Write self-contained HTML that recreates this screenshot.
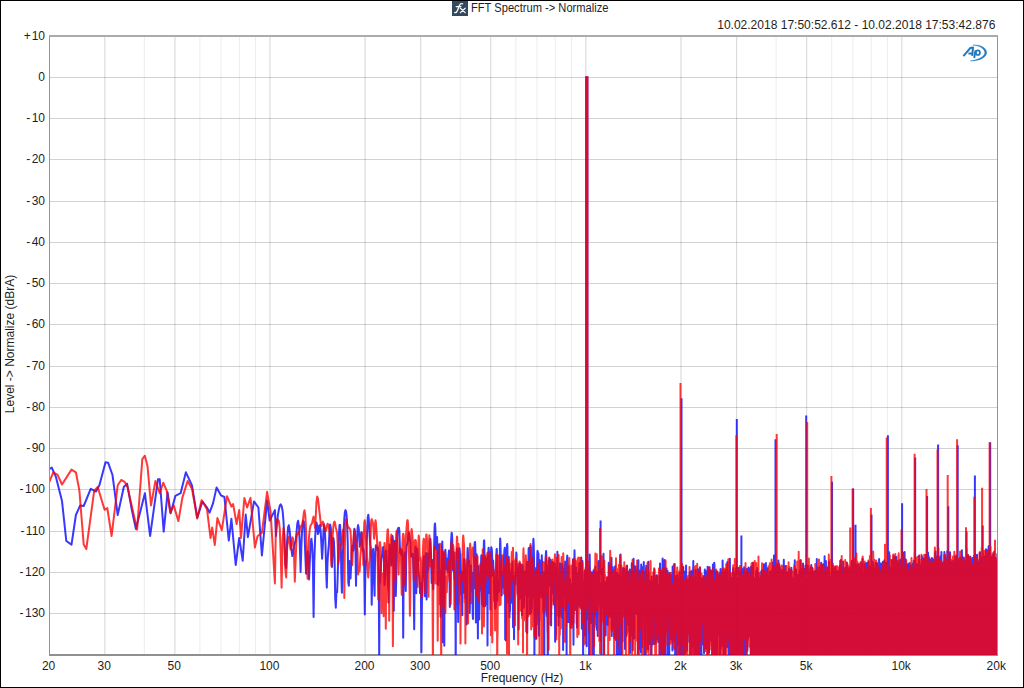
<!DOCTYPE html><html><head><meta charset="utf-8"><style>html,body{margin:0;padding:0;background:#fff;overflow:hidden}svg{display:block}text{font-family:"Liberation Sans", sans-serif;fill:#1e1e1e}</style></head><body>
<svg width="1024" height="688" viewBox="0 0 1024 688">
<rect x="0" y="0" width="1024" height="688" fill="#fff"/>
<path d="M50 77.5H997 M50 118.5H997 M50 159.5H997 M50 201.5H997 M50 242.5H997 M50 283.5H997 M50 324.5H997 M50 366.5H997 M50 407.5H997 M50 448.5H997 M50 489.5H997 M50 531.5H997 M50 572.5H997 M50 613.5H997" stroke="#000" stroke-opacity="0.176" stroke-width="1" fill="none"/>
<path d="M144.30 37V654 M199.92 37V654 M221.07 37V654 M239.39 37V654 M255.55 37V654 M460.20 37V654 M515.82 37V654 M536.97 37V654 M555.29 37V654 M571.45 37V654 M776.10 37V654 M831.72 37V654 M852.87 37V654 M871.19 37V654 M887.35 37V654" stroke="#000" stroke-opacity="0.075" stroke-width="1" fill="none"/>
<path d="M104.83 37V654 M174.91 37V654 M270.00 37V654 M365.10 37V654 M420.73 37V654 M490.81 37V654 M585.90 37V654 M681.00 37V654 M736.63 37V654 M806.71 37V654 M901.80 37V654" stroke="#000" stroke-opacity="0.17" stroke-width="1" fill="none"/>
<path d="M49.5 36V655" stroke="#959595" stroke-width="1"/>
<path d="M997.5 36V655" stroke="#959595" stroke-width="1"/>
<rect x="49" y="35" width="949" height="2" fill="#ababab"/>
<rect x="49" y="654" width="949" height="2" fill="#909090"/>
<defs><clipPath id="pc"><rect x="50" y="36" width="947" height="619"/></clipPath></defs>
<g clip-path="url(#pc)" fill="none" stroke-width="2" stroke-linejoin="round">
<path d="M49.7 468.8L51.8 467.6L55.8 476.6L62.0 501.0L66.3 541.0L71.5 544.6L75.9 515.0L80.2 505.4L83.7 506.0L90.7 488.8L96.0 491.5L99.4 485.3L105.5 462.3L108.1 462.7L112.5 475.0L117.7 515.0L123.8 487.0L127.1 483.6L131.8 509.8L135.9 529.0L144.9 493.2L150.1 536.0L158.0 479.2L159.7 479.2L163.7 531.6L167.6 492.3L170.7 513.3L175.4 495.8L180.6 493.2L185.9 472.3L192.0 485.3L197.2 517.6L202.5 501.5L207.0 507.5L209.6 512.7L213.1 503.1L216.6 487.4L220.9 495.3L224.4 497.0L228.8 540.6L231.4 518.8L235.7 565.0L239.2 538.0L242.7 560.7L245.7 514.5L247.9 537.2L254.0 501.4L258.4 507.5L261.9 555.5L267.1 500.5L269.7 520.6L274.9 510.1L276.0 535.9L277.0 523.4L277.9 515.1L278.9 509.3L279.8 505.6L280.7 504.3L281.6 505.9L282.6 510.9L283.5 521.0L284.4 539.0L285.3 564.9L286.2 568.0L287.1 541.8L288.0 527.6L288.8 525.2L289.7 530.9L290.6 540.5L291.4 549.1L292.3 556.0L293.1 552.8L294.0 547.1L294.8 543.4L295.7 540.3L296.5 532.5L297.3 523.6L298.1 520.8L299.0 526.7L299.8 545.2L300.6 571.9L301.4 545.4L302.2 527.8L303.0 520.9L303.8 521.6L304.5 532.0L305.3 555.4L306.1 573.8L306.9 555.6L307.6 551.3L308.4 560.1L309.1 579.4L309.9 559.6L310.6 542.7L311.4 538.7L312.1 544.9L312.9 563.8L313.6 616.9L314.3 562.4L315.1 538.5L315.8 526.7L316.5 522.5L317.2 526.0L317.9 534.1L318.6 532.4L319.3 525.6L320.0 525.0L320.7 531.6L321.4 544.6L322.1 558.7L322.8 547.3L323.5 530.7L324.1 524.5L324.8 528.6L325.5 544.5L326.2 572.7L326.8 587.6L327.5 562.6L328.2 551.3L328.8 545.3L329.5 532.6L330.1 524.4L330.8 527.6L331.4 542.9L332.0 566.9L332.7 550.8L333.3 538.0L333.9 541.0L334.6 558.6L335.2 598.3L335.8 607.8L336.4 592.7L337.1 592.4L337.7 576.8L338.3 552.6L338.9 534.9L339.5 525.1L340.1 525.0L340.7 537.6L341.3 574.5L341.9 592.7L342.5 563.0L343.1 548.5L343.7 530.4L344.3 518.7L344.8 512.7L345.4 510.1L346.0 511.0L346.6 515.4L347.1 523.8L347.7 541.4L348.3 582.8L348.9 585.7L349.4 561.1L350.0 563.4L350.5 578.4L351.1 566.7L351.7 550.3L352.2 545.8L352.8 550.8L353.3 550.4L353.9 536.5L354.4 528.7L354.9 532.5L355.5 550.5L356.0 585.7L356.5 557.6L357.1 537.5L357.6 527.9L358.1 525.1L358.7 528.3L359.2 536.8L359.7 546.7L360.2 543.3L360.8 534.7L361.3 532.3L361.8 537.3L362.3 546.4L362.8 550.9L363.3 548.5L363.8 551.2L364.3 571.7L364.8 614.4L365.3 573.9L365.8 565.2L366.3 557.6L366.8 542.3L367.3 526.9L367.8 517.1L368.3 514.7L368.8 519.2L369.3 529.0L369.8 539.1L370.3 544.6L370.8 547.8L371.2 559.1L371.7 604.8L372.2 578.8L372.7 552.8L373.1 549.1L373.6 558.0L374.1 582.5L374.6 595.8L375.0 563.1L375.5 549.2L376.0 545.2L376.4 546.6L376.9 549.4L377.3 549.2L377.8 547.4L378.3 551.7L378.7 572.8L379.2 657.2L379.6 584.7L380.1 581.3L380.5 573.8L381.0 563.2L381.4 557.8L381.9 556.7L382.3 553.3L382.7 547.7L383.2 547.1L383.6 554.5L384.1 569.0L384.5 585.0L384.9 579.6L385.4 561.2L385.8 551.7L386.2 550.6L386.7 555.7L387.1 565.0L387.5 574.2L387.9 579.6L388.4 602.4L388.8 584.7L389.2 551.1L389.6 544.6L390.0 549.6L390.5 552.6L390.9 560.1L391.3 565.6L391.7 551.2L392.1 540.0L392.5 535.9L392.9 539.2L393.4 554.4L393.8 610.7L394.2 561.1L394.6 541.4L395.0 540.7L395.4 554.9L395.8 596.0L396.2 582.6L396.6 553.8L397.0 540.5L397.4 532.9L397.8 529.1L398.2 528.0L398.6 527.9L399.0 527.8L399.4 531.0L399.7 541.8L400.1 552.9L400.5 549.4L400.9 549.3L401.3 555.1L401.7 553.5L402.1 550.7L402.4 557.7L402.8 578.3L403.2 637.8L403.6 585.5L404.0 563.8L404.3 554.4L404.7 552.6L405.1 559.3L405.5 583.0L405.8 591.0L406.2 557.9L406.6 546.9L407.0 544.4L407.3 543.6L407.7 541.0L408.1 536.6L408.4 533.0L408.8 532.2L409.2 534.3L409.5 538.1L409.9 540.5L410.3 541.7L410.6 547.4L411.0 555.1L411.3 556.7L411.7 555.7L412.0 554.9L412.4 553.7L412.8 553.7L413.1 559.9L413.5 574.7L413.8 598.0L414.2 629.3L414.5 592.3L414.9 564.2L415.2 550.1L415.6 546.6L415.9 556.7L416.3 593.3L416.6 570.1L417.0 551.2L417.3 548.7L417.6 552.3L418.0 557.0L418.3 562.6L418.7 570.6L419.0 575.3L419.3 576.8L419.7 583.0L420.0 593.1L420.4 586.4L420.7 582.9L421.0 597.2L421.4 652.3L421.7 624.8L422.0 597.4L422.4 584.0L422.7 577.7L423.0 572.3L423.3 563.8L423.7 557.5L424.0 556.0L424.3 558.9L424.6 568.3L425.0 596.3L425.3 589.1L425.6 559.4L425.9 552.9L426.3 564.4L426.6 599.4L426.9 578.1L427.2 558.1L427.5 553.5L427.9 560.1L428.2 570.4L428.5 566.2L428.8 560.1L429.1 557.8L429.4 555.0L429.8 548.2L430.1 541.3L430.4 539.0L430.7 542.9L431.0 552.8L431.3 567.8L431.6 582.9L431.9 573.5L432.2 560.2L432.5 560.0L432.9 584.1L433.2 589.3L433.5 570.5L433.8 567.9L434.1 549.0L434.4 533.0L434.7 525.0L435.0 523.4L435.3 527.5L435.6 536.6L435.9 546.8L436.2 549.1L436.5 543.2L436.8 537.0L437.1 537.0L437.4 547.9L437.7 584.4L438.0 585.0L438.3 553.4L438.6 544.6L438.9 544.8L439.1 553.4L439.4 573.9L439.7 581.5L440.0 570.5L440.3 575.5L440.6 616.8L440.9 589.7L441.2 574.9L441.5 601.9L441.8 568.6L442.0 544.6L442.3 541.5L442.6 557.8L442.9 642.3L443.2 565.9L443.5 552.6L443.7 553.3L444.0 568.4L444.3 645.7L444.6 575.9L444.9 556.9L445.2 550.4L445.4 549.7L445.7 555.2L446.0 564.9L446.3 569.2L446.6 564.0L446.8 558.8L447.1 560.7L447.4 567.8L447.7 571.7L447.9 567.7L448.2 560.7L448.5 555.7L448.8 552.5L449.0 550.6L449.3 557.1L449.6 584.4L449.8 607.0L450.1 603.5L450.4 596.0L450.6 561.9L450.9 546.9L451.2 538.9L451.5 534.2L451.7 532.7L452.0 534.7L452.3 540.4L452.5 550.6L452.8 565.0L453.0 570.5L453.3 558.8L453.6 552.0L453.8 553.8L454.1 563.5L454.4 575.5L454.6 579.3L454.9 577.7L455.1 581.2L455.4 598.9L455.7 670.1L455.9 609.8L456.2 588.9L456.4 568.4L456.7 554.0L457.0 548.2L457.2 550.7L457.5 562.0L457.7 582.0L458.0 606.8L458.2 622.1L458.5 604.1L458.7 576.8L459.0 558.2L459.3 549.3L459.5 548.2L459.8 551.3L460.0 552.7L460.3 553.8L460.5 559.8L460.8 572.4L461.0 594.2L461.3 585.7L461.5 571.2L461.8 573.2L462.0 591.3L462.3 615.2L462.5 587.9L462.7 578.8L463.0 583.8L463.2 593.1L463.5 591.9L463.7 576.5L464.0 563.2L464.2 558.9L464.5 559.8L464.7 560.8L464.9 564.0L465.2 578.2L465.4 598.6L465.7 580.0L465.9 579.3L466.2 597.9L466.4 610.9L466.6 624.4L466.9 615.6L467.1 571.1L467.4 553.7L467.6 547.9L467.8 550.1L468.1 557.3L468.3 562.7L468.5 562.8L468.8 564.6L469.0 563.8L469.2 561.0L469.5 570.1L469.7 612.9L469.9 604.3L470.2 587.6L470.4 586.4L470.6 575.0L470.9 566.9L471.1 565.6L471.3 573.4L471.6 590.5L471.8 580.8L472.0 572.6L472.3 576.4L472.5 587.7L472.7 615.1L473.0 618.9L473.2 585.3L473.4 575.3L473.6 580.6L473.9 588.4L474.1 566.7L474.3 551.5L474.5 544.8L474.8 542.4L475.0 542.0L475.2 543.8L475.4 550.8L475.7 571.3L475.9 622.6L476.1 570.4L476.3 556.9L476.6 554.3L476.8 558.1L477.0 568.2L477.2 589.0L477.5 611.7L477.7 612.1L477.9 638.5L478.1 589.1L478.3 569.6L478.6 566.0L478.8 574.1L479.0 593.0L479.2 619.5L479.4 608.1L479.7 587.2L479.9 576.2L480.1 574.4L480.3 580.7L480.5 590.6L480.7 583.8L481.0 567.5L481.2 557.1L481.4 555.2L481.6 562.0L481.8 578.1L482.0 604.0L482.2 584.6L482.5 563.9L482.7 556.7L482.9 558.7L483.1 571.3L483.3 606.4L483.5 571.1L483.7 549.8L483.9 541.0L484.2 540.4L484.4 547.7L484.6 565.3L484.8 605.9L485.0 606.2L485.2 579.8L485.4 575.4L485.6 579.2L485.8 569.6L486.0 558.1L486.2 560.0L486.5 583.4L486.7 604.3L486.9 573.9L487.1 569.5L487.3 580.5L487.5 645.6L487.7 583.0L487.9 562.3L488.1 556.1L488.3 552.3L488.5 548.2L488.7 547.7L488.9 553.1L489.1 566.6L489.3 593.0L489.5 586.0L489.7 569.4L489.9 565.7L490.1 570.9L490.3 590.4L490.5 609.5L490.7 573.5L490.9 557.2L491.1 549.7L491.3 547.2L491.5 547.9L491.7 549.3L491.9 550.8L492.1 555.2L492.3 564.7L492.5 575.4L492.7 570.5L492.9 561.8L493.1 560.4L493.3 564.8L493.5 568.9L493.7 569.2L493.9 574.3L494.1 588.2L494.3 601.2L494.5 596.6L494.7 594.3L494.9 599.4L495.1 607.1L495.3 608.7L495.5 603.4L495.7 608.0L495.9 602.9L496.1 580.0L496.3 564.0L496.4 554.4L496.6 549.1L496.8 548.9L497.0 558.8L497.2 590.5L497.4 600.7L497.6 581.3L497.8 580.4L498.0 582.8L498.2 585.6L498.4 585.2L498.6 582.3L498.7 581.1L498.9 583.4L499.1 591.7L499.3 589.3L499.5 570.9L499.7 558.7L499.9 549.4L500.1 541.5L500.2 538.4L500.4 541.5L500.6 549.0L500.8 555.8L501.0 556.9L501.2 557.0L501.4 565.4L501.6 593.7L501.7 595.4L501.9 579.1L502.1 581.9L502.3 584.1L502.5 576.9L502.7 571.9L502.8 572.3L503.0 577.6L503.2 584.6L503.4 587.6L503.6 580.8L503.8 569.5L503.9 560.8L504.1 555.2L504.3 552.1L504.5 549.6L504.7 547.8L504.9 551.0L505.0 567.4L505.2 639.4L505.4 594.7L505.6 596.6L505.8 640.4L505.9 629.9L506.1 598.3L506.3 574.6L506.5 561.6L506.7 553.6L506.8 547.9L507.0 544.8L507.2 543.9L507.4 547.5L507.6 562.3L507.7 596.1L507.9 576.0L508.1 571.8L508.3 602.4L508.4 582.2L508.6 558.5L508.8 556.9L509.0 568.4L509.1 586.7L509.3 606.4L509.5 617.4L509.7 588.3L509.8 585.0L510.0 611.3L510.2 581.9L510.4 572.8L510.5 592.8L510.7 597.9L510.9 582.0L511.1 602.8L511.2 601.1L511.4 570.5L511.6 569.4L511.8 574.9L511.9 569.5L512.1 567.5L512.3 565.0L512.4 561.6L512.6 566.3L512.8 588.9L513.0 627.2L513.1 598.3L513.3 594.1L513.5 582.0L513.6 579.9L513.8 600.6L514.0 639.2L514.1 591.8L514.3 583.8L514.5 581.0L514.7 575.5L514.8 575.6L515.0 583.2L515.2 584.6L515.3 577.0L515.5 572.2L515.7 571.5L515.8 571.9L516.0 566.3L516.2 557.2L516.3 552.6L516.5 554.2L516.7 561.6L516.8 571.4L517.0 572.4L517.2 568.4L517.3 571.8L517.5 582.6L517.7 593.4L517.8 593.8L518.0 583.5L518.2 575.8L518.3 579.6L518.5 600.0L518.6 629.4L518.8 599.0L519.0 578.4L519.1 567.0L519.3 563.5L519.5 569.3L519.6 582.9L519.8 595.0L520.0 598.4L520.1 584.0L520.3 572.0L520.4 566.2L520.6 564.0L520.8 564.3L520.9 566.8L521.1 570.3L521.2 571.3L521.4 569.8L521.6 570.4L521.7 577.8L521.9 604.2L522.0 615.2L522.2 579.2L522.4 567.7L522.5 565.1L522.7 567.3L522.8 573.1L523.0 580.7L523.2 581.4L523.3 575.5L523.5 573.0L523.6 579.7L523.8 607.8L524.0 600.4L524.1 574.5L524.3 571.3L524.4 581.3L524.6 593.4L524.7 595.0L524.9 592.4L525.1 585.1L525.2 578.8L525.4 578.0L525.5 579.9L525.7 577.4L525.8 571.3L526.0 571.7L526.1 586.2L526.3 631.8L526.5 586.3L526.6 566.7L526.8 562.1L526.9 568.0L527.1 586.0L527.2 633.0L527.4 614.2L527.5 594.6L527.7 591.9L527.8 595.7L528.0 596.2L528.1 586.5L528.3 568.8L528.5 555.6L528.6 549.2L528.8 547.9L528.9 550.3L529.1 555.8L529.2 564.6L529.4 575.6L529.5 586.6L529.7 591.0L529.8 614.3L530.0 605.1L530.1 568.9L530.3 556.7L530.4 550.3L530.6 546.1L530.7 546.9L530.9 555.5L531.0 575.6L531.2 605.7L531.3 612.3L531.5 592.7L531.6 585.9L531.8 608.9L531.9 605.2L532.1 568.6L532.2 559.9L532.4 565.8L532.5 584.2L532.7 597.5L532.8 579.2L533.0 561.6L533.1 548.4L533.3 540.8L533.4 538.7L533.5 540.4L533.7 544.0L533.8 549.5L534.0 557.2L534.1 567.0L534.3 584.5L534.4 668.7L534.6 586.8L534.7 567.4L534.9 568.2L535.0 590.3L535.2 600.4L535.3 578.1L535.4 570.3L535.6 569.4L535.7 577.6L535.9 600.8L536.0 638.8L536.2 622.7L536.3 606.6L536.5 597.4L536.6 602.3L536.7 624.7L536.9 590.5L537.0 569.7L537.2 559.5L537.3 553.9L537.5 551.0L537.6 550.9L537.7 552.9L537.9 556.7L538.0 560.6L538.2 558.4L538.3 553.1L538.5 554.5L538.6 566.5L538.7 590.6L538.9 635.7L539.0 630.9L539.2 600.9L539.3 582.2L539.4 568.8L539.6 561.5L539.7 560.3L539.9 565.1L540.0 575.6L540.2 588.5L540.3 593.8L540.4 588.3L540.6 580.5L540.7 573.4L540.9 569.4L541.0 570.7L541.1 578.6L541.3 590.3L541.4 597.6L541.5 583.3L541.7 562.8L541.8 555.3L542.0 561.7L542.1 581.4L542.2 589.8L542.4 585.0L542.5 588.4L542.7 592.6L542.8 590.7L542.9 586.6L543.1 587.0L543.2 594.4L543.3 612.0L543.5 604.7L543.6 584.8L543.7 575.8L543.9 572.2L544.0 574.6L544.2 592.4L544.3 661.3L544.4 591.4L544.6 579.7L544.7 587.8L544.8 607.6L545.0 583.6L545.1 577.9L545.2 588.1L545.4 580.7L545.5 564.3L545.6 557.7L545.8 555.5L545.9 552.8L546.1 551.1L546.2 551.9L546.3 555.0L546.5 562.3L546.6 578.6L546.7 614.4L546.9 616.1L547.0 600.5L547.1 596.7L547.3 596.3L547.4 601.2L547.5 614.3L547.7 638.7L547.8 700.0L547.9 645.0L548.1 604.5L548.2 580.0L548.3 569.1L548.4 568.6L548.6 570.4L548.7 565.1L548.8 560.4L549.0 561.8L549.1 566.5L549.2 568.0L549.4 562.9L549.5 558.2L549.6 559.6L549.8 566.9L549.9 577.9L550.0 586.1L550.2 580.7L550.3 573.6L550.4 569.2L550.5 563.7L550.7 560.3L550.8 564.8L550.9 580.9L551.1 625.5L551.2 613.1L551.3 585.0L551.4 571.5L551.6 564.2L551.7 562.3L551.8 565.6L552.0 571.9L552.1 574.5L552.2 574.3L552.3 578.1L552.5 588.8L552.6 593.3L552.7 577.2L552.9 565.4L553.0 562.1L553.1 565.7L553.2 573.0L553.4 576.8L553.5 573.0L553.6 567.7L553.8 566.2L553.9 573.3L554.0 591.5L554.1 603.9L554.3 595.1L554.4 583.3L554.5 571.6L554.6 564.7L554.8 563.4L554.9 569.9L555.0 592.8L555.1 641.7L555.3 591.8L555.4 583.0L555.5 588.3L555.6 611.4L555.8 634.7L555.9 598.1L556.0 587.3L556.1 585.6L556.3 588.9L556.4 583.6L556.5 570.9L556.6 567.8L556.8 577.5L556.9 597.3L557.0 599.1L557.1 575.2L557.3 557.7L557.4 551.8L557.5 556.0L557.6 568.0L557.8 584.1L557.9 592.9L558.0 588.3L558.1 584.8L558.5 625.6L558.6 592.6L558.7 586.6L558.9 593.6L559.0 589.6L559.1 580.8L559.2 586.5L559.3 616.0L559.5 616.3L559.6 593.9L559.7 582.7L559.8 569.9L560.0 563.3L560.1 568.9L560.2 587.4L560.3 613.1L560.4 607.6L560.6 579.1L560.7 567.9L560.8 564.4L560.9 565.9L561.0 575.8L561.2 596.5L561.3 596.6L561.4 584.0L561.5 579.2L561.6 584.9L561.8 614.7L561.9 617.4L562.0 578.4L562.2 563.9L562.5 585.9L562.6 590.4L562.7 578.4L562.8 572.3L563.0 583.4L563.1 650.1L563.2 598.9L563.3 584.2L563.4 576.3L563.6 568.4L563.7 569.1L563.8 579.5L563.9 594.1L564.0 596.3L564.4 571.7L564.5 578.4L564.6 587.8L564.7 589.1L564.8 578.2L565.0 566.5L565.1 561.4L565.2 565.5L565.3 581.1L565.4 605.8L565.5 610.6L565.7 603.8L565.8 601.5L565.9 602.9L566.0 604.7L566.2 595.5L566.5 610.6L566.6 658.3L566.7 602.3L566.8 574.3L566.9 562.3L567.1 557.7L567.2 555.9L567.3 555.6L567.4 558.2L567.5 564.2L568.0 614.5L568.1 621.9L568.2 612.7L568.3 616.2L568.4 587.0L568.5 570.6L568.7 566.2L569.0 622.0L569.1 612.1L569.2 598.9L569.3 593.7L569.4 591.1L569.6 590.7L569.7 591.9L569.8 588.9L569.9 580.6L570.0 579.3L570.5 605.5L570.6 619.2L570.7 627.8L570.8 594.2L570.9 583.9L571.0 589.9L571.1 599.4L571.4 589.4L571.5 590.2L571.6 592.0L571.7 599.2L571.8 618.8L571.9 619.4L572.0 609.8L572.3 623.9L572.5 623.0L572.6 619.7L572.7 594.3L572.8 576.1L572.9 564.5L573.0 559.2L573.5 644.8L573.6 605.5L573.7 579.0L573.8 569.1L573.9 571.4L574.0 577.3L574.5 550.2L574.6 556.2L575.0 579.7L575.1 579.9L575.2 579.8L575.3 581.6L575.4 589.3L575.5 603.2L575.6 610.0L576.0 571.3L576.1 567.5L576.2 567.7L576.3 573.8L576.4 583.8L576.5 591.3L576.7 624.0L576.9 598.9L577.0 627.4L577.4 587.9L577.5 588.8L577.6 593.9L577.7 602.3L577.8 607.8L577.9 597.1L578.0 582.4L578.2 573.3L578.4 605.1L578.5 602.7L579.0 571.9L579.1 569.7L579.4 562.9L579.5 565.8L579.6 579.6L579.7 596.6L579.8 576.2L579.9 570.2L580.0 581.4L580.3 607.3L580.4 605.9L580.5 594.8L581.0 573.0L581.1 568.3L581.3 557.5L581.5 565.1L581.6 575.2L581.8 628.7L582.0 598.8L582.1 586.6L582.2 571.1L582.3 562.3L582.4 560.9L582.5 565.9L582.9 592.8L583.0 613.9L583.1 664.9L583.4 594.1L583.5 590.6L583.7 626.5L583.9 597.4L584.0 589.7L584.3 580.4L584.5 585.4L584.6 592.9L584.8 635.4L585.0 574.7L585.1 570.3L585.3 581.7L585.5 580.8L585.6 583.8L585.9 596.8L586.0 595.5L586.1 588.2L586.4 559.6L586.5 565.3L586.6 586.6L586.7 646.3L587.0 573.8L587.1 569.6L587.3 572.4L587.5 568.0L587.6 571.9L587.9 619.3L588.0 611.7L588.1 596.1L588.4 570.7L588.5 572.5L588.5 577.6L588.9 595.0L589.0 612.7L589.1 671.5L589.4 578.4L589.5 574.7L589.7 554.4L589.9 568.0L590.0 597.5L590.3 621.0L590.4 611.7L590.5 598.6L590.8 571.9L591.0 603.9L591.1 622.9L591.5 572.5L591.6 580.7L592.0 618.4L592.1 608.4L592.4 594.6L592.5 594.0L592.6 597.3L592.8 586.7L592.9 597.2L593.0 654.0L593.4 570.6L593.5 574.5L593.6 588.7L593.8 670.9L594.0 600.1L594.1 592.1L594.1 590.2L594.4 616.3L594.5 586.1L594.7 575.3L595.0 582.2L595.1 584.0L595.3 566.8L595.5 597.4L595.6 591.0L595.8 600.2L595.9 578.4L596.0 571.7L596.4 627.2L596.5 592.6L596.6 582.3L596.9 629.7L597.0 602.4L597.0 589.3L597.2 576.8L597.4 600.9L597.5 597.7L597.7 636.0L598.0 574.5L598.1 572.0L598.2 579.0L598.4 572.7L598.5 568.8L598.7 560.9L599.0 600.3L599.1 586.7L599.4 564.7L599.5 564.9L600.0 606.2L600.1 599.4L600.3 583.7L600.4 640.5L600.5 620.8L601.0 595.8L601.1 601.9L601.2 633.6L601.4 627.5L601.5 659.6L601.8 586.9L602.0 604.6L602.0 598.7L602.2 568.6L602.5 585.2L602.6 577.5L602.7 574.2L602.9 598.7L603.0 606.6L603.5 553.7L603.6 560.6L604.0 617.7L604.1 668.7L604.3 611.9L604.4 634.4L604.5 606.6L604.8 623.9L605.0 583.2L605.1 588.7L605.1 598.8L605.4 582.8L605.5 589.2L605.6 608.4L605.7 635.6L605.9 604.4L606.0 587.0L606.1 581.6L606.3 595.2L606.4 583.1L606.5 585.7L606.9 617.1L607.0 615.2L607.0 584.4L607.1 578.0L607.5 594.9L607.6 610.7L607.6 597.3L607.8 625.0L608.0 604.0L608.1 593.6L608.2 579.5L608.4 617.2L608.5 595.1L608.7 562.8L608.9 599.6L609.0 583.6L609.2 570.5L609.4 595.5L609.5 589.8L609.8 571.2L609.9 581.4L610.0 584.3L610.3 616.7L610.4 568.1L610.5 564.6L610.9 610.5L610.9 594.6L611.0 590.0L611.2 597.8L611.5 562.7L611.5 557.7L611.8 635.9L611.9 598.7L612.0 592.2L612.4 600.6L612.4 583.1L612.5 573.6L612.8 567.3L612.9 574.5L613.0 584.0L613.4 604.9L613.5 627.8L613.7 588.9L613.9 597.8L614.0 595.8L614.3 638.2L614.4 609.7L614.5 603.6L614.8 617.4L615.0 571.2L615.1 566.3L615.5 638.6L615.6 622.4L615.8 639.9L616.0 589.7L616.0 591.1L616.1 627.8L616.4 573.1L616.5 579.6L616.8 655.9L616.9 584.9L617.0 589.7L617.2 614.7L617.4 572.7L617.5 582.3L617.6 621.5L617.9 653.9L618.0 629.9L618.0 608.6L618.2 651.0L618.4 611.2L618.5 590.4L618.8 575.1L619.0 576.8L619.1 584.2L619.5 601.4L619.5 619.5L619.6 700.0L619.9 575.1L619.9 592.8L620.0 625.6L620.5 555.6L620.6 554.4L621.0 604.5L621.0 611.8L621.3 665.8L621.5 594.0L621.6 612.8L621.6 616.8L622.0 578.3L622.0 585.5L622.3 641.7L622.5 641.4L622.6 607.5L622.8 615.2L623.0 579.8L623.0 570.7L623.1 568.1L623.3 597.1L623.5 577.4L623.6 581.2L623.8 572.9L624.0 606.4L624.0 597.4L624.3 597.5L624.5 590.0L624.6 582.1L624.7 569.1L624.9 616.6L625.0 648.9L625.2 601.2L625.5 622.4L625.5 637.0L626.0 576.0L626.1 572.4L626.4 636.1L626.4 604.6L626.5 590.4L626.8 616.2L627.0 565.4L627.0 568.7L627.4 592.7L627.5 592.6L627.6 595.5L627.7 606.6L627.9 571.6L628.0 572.9L628.4 595.6L628.5 624.9L628.7 595.5L629.0 601.2L629.0 587.0L629.1 583.7L629.3 631.0L629.5 591.1L629.5 603.7L629.8 569.4L630.0 611.8L630.1 652.9L630.4 581.8L630.5 584.4L630.6 589.6L630.9 620.1L631.0 590.6L631.1 597.5L631.2 635.6L631.4 627.9L631.5 585.4L631.8 563.2L631.9 564.4L632.0 565.1L632.2 604.8L632.4 571.3L632.5 573.5L632.8 650.2L632.9 591.4L633.0 583.7L633.1 616.6L633.4 599.1L633.5 572.8L633.6 558.7L633.9 607.9L634.0 619.8L634.2 587.5L634.5 638.4L634.6 592.8L635.0 568.1L635.1 566.2L635.4 597.2L635.5 594.8L635.5 589.2L635.6 589.9L635.8 569.9L636.0 576.7L636.0 588.6L636.4 604.1L636.5 591.9L636.5 597.5L636.6 614.1L636.9 580.3L637.0 589.8L637.1 605.1L637.5 568.6L637.6 566.3L637.8 584.1L638.0 584.0L638.0 595.2L638.2 700.0L638.4 560.3L638.5 568.9L638.5 583.6L638.7 569.2L638.9 594.1L639.0 612.8L639.1 625.3L639.4 596.5L639.5 599.3L639.5 607.9L639.6 613.6L639.8 595.1L640.0 612.5L640.0 587.9L640.1 579.6L640.3 649.6L640.5 613.8L640.6 582.2L640.6 570.7L640.8 652.6L641.0 572.0L641.0 574.9L641.2 564.4L641.4 629.4L641.4 575.6L641.5 567.2L641.8 614.5L642.0 595.2L642.0 605.4L642.1 647.0L642.4 567.3L642.5 573.3L642.6 607.3L643.0 598.3L643.0 604.4L643.4 573.0L643.5 606.7L643.6 612.2L643.8 562.1L644.0 589.2L644.0 585.5L644.4 640.1L644.5 593.7L644.5 582.2L644.7 673.5L644.9 626.3L645.0 578.3L645.1 572.4L645.5 641.4L645.5 667.2L645.7 599.0L646.0 611.8L646.0 586.8L646.2 565.7L646.5 606.0L646.6 614.6L646.6 615.4L646.8 590.2L646.9 610.6L647.0 589.5L647.1 620.0L647.3 575.2L647.5 587.1L647.5 595.6L647.8 649.2L648.0 602.8L648.0 595.9L648.2 649.7L648.5 574.0L648.5 561.7L648.9 608.5L649.0 589.9L649.1 600.3L649.4 643.9L649.5 617.9L649.6 596.2L649.7 616.9L649.9 592.1L650.0 580.9L650.4 625.8L650.4 603.8L650.5 588.6L650.6 608.5L650.9 580.8L651.0 588.0L651.2 700.0L651.4 641.2L651.5 594.6L651.6 576.5L651.8 608.1L651.9 596.4L652.0 607.1L652.2 600.8L652.5 622.2L652.6 599.6L652.7 644.4L653.0 608.2L653.1 600.2L653.2 581.7L653.4 621.4L653.5 592.9L653.5 590.1L653.7 618.9L653.9 573.3L654.0 579.7L654.0 594.4L654.2 643.8L654.4 569.2L654.5 570.4L654.5 585.1L654.8 636.7L654.9 594.4L655.0 590.9L655.1 585.8L655.4 620.1L655.5 602.0L655.6 604.4L655.6 643.4L655.8 589.1L656.0 601.2L656.0 606.3L656.1 609.4L656.3 578.1L656.5 595.1L656.5 602.2L656.6 639.4L656.8 575.3L657.0 589.4L657.1 589.7L657.4 617.1L657.5 589.5L657.5 576.0L657.7 624.3L658.0 613.9L658.0 587.2L658.2 641.9L658.5 602.0L658.5 597.0L658.8 634.1L659.0 587.9L659.0 586.8L659.3 625.3L659.4 585.6L659.5 587.5L659.5 603.2L659.6 654.7L660.0 571.9L660.0 563.6L660.4 649.3L660.5 605.7L660.5 613.5L660.7 604.8L660.9 664.0L661.0 629.8L661.1 655.8L661.5 571.9L661.5 578.7L661.7 624.7L661.9 570.4L662.0 573.1L662.0 574.3L662.4 654.8L662.5 587.4L662.5 564.5L662.6 558.5L663.0 598.4L663.0 602.4L663.3 663.6L663.5 580.0L663.5 577.5L664.0 671.3L664.1 601.1L664.3 584.2L664.4 614.0L664.5 583.2L664.6 559.9L664.8 620.5L665.0 573.1L665.0 600.5L665.1 589.5L665.4 646.7L665.5 614.3L665.5 608.6L665.7 679.7L665.8 590.0L666.0 592.5L666.0 584.3L666.1 617.6L666.5 576.7L666.5 568.6L666.9 629.9L667.0 612.4L667.0 584.3L667.1 572.5L667.3 611.8L667.5 589.3L667.5 576.4L667.6 571.1L668.0 607.5L668.0 654.5L668.1 578.7L668.5 606.8L668.5 653.1L668.7 596.8L669.0 602.6L669.0 623.6L669.2 676.2L669.4 579.0L669.5 584.6L669.5 600.6L669.7 573.0L670.0 622.8L670.1 619.5L670.2 636.8L670.4 575.9L670.5 586.7L670.5 589.6L670.7 575.3L670.8 617.0L671.0 592.6L671.0 590.8L671.1 639.0L671.4 590.2L671.5 592.6L671.5 591.7L671.6 619.4L672.0 607.1L672.1 585.7L672.4 650.6L672.5 608.8L672.5 587.5L672.6 566.5L672.8 615.2L673.0 598.0L673.0 614.9L673.1 627.5L673.5 591.0L673.5 589.8L673.6 634.7L673.9 572.5L674.0 581.8L674.0 609.1L674.2 641.5L674.4 594.7L674.5 599.1L674.5 606.6L674.7 564.0L674.9 611.4L675.0 609.4L675.0 589.7L675.1 582.9L675.2 682.2L675.5 607.1L675.5 603.0L675.6 588.3L675.9 641.7L676.0 622.0L676.0 616.6L676.3 628.2L676.4 589.0L676.5 622.5L676.5 593.6L676.6 575.9L676.7 666.7L677.0 605.9L677.1 640.2L677.3 574.9L677.5 644.9L677.5 600.3L677.7 612.2L678.0 578.8L678.0 586.9L678.2 634.1L678.4 584.4L678.5 586.3L678.5 601.4L678.6 616.8L678.9 579.7L678.9 585.4L679.0 614.3L679.3 669.9L679.5 592.2L679.5 588.5L679.6 603.2L679.8 572.5L680.0 584.0L680.0 603.6L680.2 676.7L680.4 575.9L680.5 584.0L680.5 589.1L680.6 645.8L681.0 623.7L681.0 615.5L681.2 586.4L681.4 666.5L681.5 652.2L681.5 634.5L681.6 577.1L681.7 645.1L682.0 598.7L682.0 628.9L682.3 585.2L682.4 700.0L682.5 617.8L682.5 587.1L682.6 568.0L682.9 642.5L683.0 587.6L683.0 570.4L683.2 616.3L683.3 567.0L683.5 613.2L683.5 590.0L684.0 634.7L684.0 620.9L684.2 654.1L684.5 582.4L684.5 581.5L684.8 578.1L685.0 616.9L685.0 600.6L685.2 571.6L685.5 597.1L685.5 624.0L685.6 653.0L685.7 577.2L686.0 596.8L686.0 576.0L686.1 565.5L686.2 629.8L686.5 608.9L686.5 647.7L686.7 581.4L687.0 650.6L687.0 623.0L687.2 598.1L687.5 601.0L687.5 603.4L687.8 585.3L687.9 627.7L688.0 600.3L688.0 591.6L688.1 579.6L688.5 628.4L688.5 613.0L688.5 603.1L688.6 589.3L689.0 601.3L689.0 635.0L689.1 584.5L689.3 641.9L689.5 630.5L689.5 614.4L689.6 618.3L689.7 573.2L690.0 592.4L690.0 584.8L690.2 571.8L690.3 664.0L690.5 589.0L690.5 591.8L690.6 607.8L690.9 571.4L691.0 571.7L691.0 585.3L691.4 584.9L691.5 689.4L691.5 621.9L691.6 700.0L691.8 573.4L692.0 589.3L692.0 586.5L692.2 570.5L692.4 646.7L692.5 623.0L692.5 633.2L692.9 584.1L693.0 592.7L693.0 587.7L693.3 560.9L693.4 627.3L693.5 599.2L693.5 581.4L694.0 632.7L694.0 632.5L694.0 640.8L694.4 668.6L694.5 588.4L694.5 584.2L694.8 577.7L695.0 657.9L695.0 611.7L695.1 592.0L695.3 630.6L695.5 602.5L695.5 590.1L695.7 569.8L696.0 618.3L696.0 577.6L696.1 577.2L696.5 618.5L696.5 634.7L696.7 602.9L696.9 700.0L697.0 635.5L697.0 644.7L697.4 583.1L697.5 632.7L697.5 608.7L697.7 613.7L697.9 569.2L698.0 574.3L698.0 598.5L698.2 598.0L698.3 688.3L698.5 599.3L698.5 608.2L698.7 636.9L698.9 586.3L699.0 596.8L699.0 602.3L699.2 569.2L699.4 631.3L699.5 619.8L699.5 616.0L699.8 621.3L699.9 567.5L700.0 571.0L700.0 592.9L700.2 668.7L700.4 587.9L700.5 623.1L700.5 601.1L700.6 610.0L700.8 578.1L701.0 587.8L701.0 589.5L701.2 588.1L701.4 671.3L701.5 620.7L701.5 608.8L701.6 635.8L701.8 588.8L702.0 608.7L702.0 578.4L702.4 634.0L702.5 579.5L702.5 586.3L702.9 640.7L703.0 603.3L703.0 612.4L703.3 588.4L703.4 644.7L703.5 624.5L703.5 584.3L703.7 641.3L703.8 576.6L704.0 618.0L704.0 653.2L704.3 578.8L704.5 598.9L704.5 597.4L704.6 620.0L704.8 569.6L705.0 582.6L705.0 599.4L705.2 575.2L705.5 617.6L705.5 596.7L705.7 571.6L705.9 648.4L706.0 593.6L706.0 626.3L706.3 630.4L706.4 579.6L706.5 584.4L706.5 584.9L706.6 571.1L706.7 611.1L707.0 607.8L707.0 632.2L707.2 634.7L707.3 586.7L707.5 597.4L707.5 576.9L707.6 566.7L707.7 654.2L708.0 602.1L708.0 624.3L708.1 581.7L708.3 648.5L708.5 582.5L708.5 607.9L708.6 583.0L709.0 647.1L709.0 602.0L709.0 614.0L709.1 652.5L709.2 582.0L709.5 590.1L709.5 599.7L709.6 567.3L709.9 636.4L710.0 622.7L710.0 622.3L710.1 628.1L710.2 576.5L710.5 586.4L710.5 596.9L710.7 640.5L711.0 572.7L711.0 572.0L711.3 570.9L711.3 598.8L711.5 592.7L711.5 610.3L711.6 576.8L711.9 624.0L712.0 581.1L712.0 592.6L712.2 678.1L712.4 587.2L712.5 596.6L712.5 578.0L712.6 625.3L712.9 564.5L713.0 570.6L713.0 611.3L713.3 635.8L713.5 581.3L713.5 586.2L713.9 639.9L713.9 583.5L714.0 598.2L714.0 700.0L714.2 562.7L714.5 564.8L714.5 574.7L714.8 670.4L715.0 597.2L715.0 588.4L715.2 620.3L715.4 571.8L715.5 591.7L715.5 625.4L715.6 578.2L715.7 657.3L716.0 593.3L716.0 595.5L716.4 636.0L716.5 571.0L716.5 573.7L716.9 625.5L717.0 571.8L717.0 595.8L717.1 686.6L717.5 583.2L717.5 579.0L718.0 617.5L718.0 602.5L718.2 574.5L718.3 620.7L718.5 588.0L718.5 578.5L718.6 634.9L719.0 627.6L719.0 606.6L719.4 576.4L719.4 633.4L719.5 623.7L719.5 614.5L719.6 573.0L719.8 671.0L720.0 617.4L720.0 656.5L720.5 569.1L720.5 581.4L720.5 604.4L720.6 649.5L720.7 579.3L721.0 589.9L721.0 639.8L721.4 581.0L721.5 589.2L721.5 617.7L721.8 646.2L722.0 588.7L722.0 585.6L722.4 613.7L722.5 571.8L722.5 596.7L722.6 638.3L722.6 560.4L723.0 591.1L723.0 583.8L723.1 628.8L723.3 576.9L723.5 601.6L723.5 591.9L723.6 577.3L723.8 684.3L724.0 608.0L724.0 611.9L724.2 592.5L724.5 670.4L724.5 607.8L724.7 650.3L724.8 572.0L725.0 648.5L725.0 662.0L725.4 570.1L725.5 600.9L725.5 586.9L725.6 570.9L725.9 617.3L726.0 605.5L726.0 602.6L726.2 583.8L726.4 641.5L726.5 587.7L726.5 581.3L726.7 614.0L727.0 571.5L727.0 587.9L727.1 647.0L727.4 561.9L727.5 573.5L727.5 608.7L727.7 570.5L727.8 638.3L728.0 609.2L728.0 589.9L728.2 581.0L728.4 652.6L728.5 634.9L728.5 597.1L728.6 680.1L728.8 588.4L729.0 621.4L729.0 661.8L729.2 585.4L729.4 683.2L729.5 593.6L729.5 641.5L729.8 667.1L729.9 558.7L730.0 597.3L730.0 625.7L730.1 629.0L730.3 583.1L730.5 594.1L730.5 601.4L730.7 578.0L730.7 608.9L731.0 589.4L731.0 588.3L731.2 677.2L731.2 587.1L731.5 608.3L731.5 584.2L731.6 578.7L731.9 656.3L732.0 582.1L732.0 577.8L732.5 629.9L732.5 600.1L732.5 604.5L732.8 573.2L733.0 635.9L733.0 604.6L733.1 568.3L733.4 658.6L733.5 605.3L733.5 621.4L733.7 633.1L733.9 572.5L734.0 610.8L734.0 613.9L734.1 576.1L734.2 633.5L734.5 596.6L734.5 587.4L734.9 675.7L735.0 605.3L735.0 603.2L735.1 677.5L735.3 581.7L735.5 597.2L735.5 612.6L735.6 571.9L735.7 683.7L736.0 575.2L736.0 568.2L736.4 658.4L736.5 603.6L736.5 612.1L736.7 669.2L736.8 589.6L737.0 622.6L737.0 655.0L737.4 578.0L737.5 638.9L737.5 602.2L737.8 643.0L737.9 580.0L738.0 590.1L738.0 598.8L738.0 648.8L738.3 589.3L738.5 612.2L738.5 632.9L738.6 568.0L738.9 656.2L739.0 582.5L739.0 592.9L739.2 573.6L739.4 700.0L739.5 600.4L739.5 622.4L739.6 574.7L739.9 663.5L740.0 600.5L740.0 619.6L740.1 630.9L740.5 571.0L740.5 586.2L740.8 680.0L740.9 582.0L741.0 587.6L741.0 586.9L741.1 573.8L741.3 680.9L741.5 673.6L741.5 628.9L741.7 568.8L742.0 599.4L742.0 591.8L742.1 581.0L742.2 670.8L742.5 592.1L742.5 612.1L742.6 569.3L743.0 700.0L743.0 650.7L743.5 579.5L743.5 579.4L743.9 639.5L744.0 627.1L744.0 628.1L744.1 567.3L744.3 644.7L744.5 597.7L744.5 604.8L744.9 573.6L745.0 673.4L745.0 608.6L745.0 600.3L745.4 626.4L745.5 573.1L745.5 586.9L745.5 575.9L745.7 572.1L745.8 695.7L746.0 608.7L746.0 603.0L746.4 584.1L746.5 700.0L746.5 675.8L746.5 612.9L746.6 569.0L746.6 685.2L747.0 593.5L747.0 602.0L747.4 651.0L747.5 579.3L747.5 591.1L747.7 588.6L747.8 639.7L748.0 614.7L748.0 598.6L748.2 568.5L748.3 634.5L748.5 571.9L748.5 567.4L749.0 636.8L749.0 595.9L749.0 573.5L749.1 618.1L749.5 586.0L749.5 600.7L749.6 569.3L749.8 624.8L750.0 586.1L750.0 586.6L750.1 616.2L750.2 581.0L750.5 592.0L750.5 629.1L750.7 567.1L751.0 601.6L751.0 660.0L751.5 571.3L751.5 566.4L751.9 650.8L752.0 605.8L752.0 681.2L752.4 696.7L752.5 581.2L752.5 572.0L752.6 653.1L752.9 567.0L753.0 588.5L753.0 590.1L753.1 562.8L753.4 660.4L753.5 621.4L753.5 582.9L753.6 581.9L753.7 659.1L754.0 632.4L754.0 656.5L754.0 693.7L754.2 578.6L754.5 611.1L754.5 623.4L754.6 660.2L754.6 586.2L755.0 624.3L755.0 581.6L755.1 667.6L755.5 578.1L755.5 586.2L755.5 654.0L755.9 588.4L756.0 596.3L756.0 575.6L756.2 571.0L756.4 668.1L756.5 622.5L756.5 596.8L756.6 676.4L756.6 586.5L757.0 627.0L757.0 632.1L757.2 568.0L757.3 692.5L757.5 628.5L757.5 594.4L757.6 579.8L757.6 630.4L758.0 597.2L758.0 666.8L758.5 573.3L758.5 587.4L758.5 642.1L758.6 578.1L759.0 671.8L759.0 649.8L759.0 665.8L759.4 579.1L759.5 591.6L759.5 579.2L759.8 665.3L759.9 578.4L760.0 591.0L760.0 591.2L760.4 582.8L760.5 674.5L760.5 608.1L760.8 578.7L760.8 670.8L761.0 583.2L761.0 597.7L761.2 571.2L761.3 672.9L761.5 589.3L761.5 640.8L761.8 582.4L762.0 664.4L762.0 620.6L762.0 606.5L762.1 640.1L762.5 570.1L762.5 586.0L762.5 609.3L762.7 576.6L763.0 700.0L763.0 627.5L763.0 611.4L763.3 671.8L763.4 575.5L763.5 628.8L763.5 617.4L763.7 640.0L763.8 574.3L764.0 585.7L764.0 564.3L764.4 700.0L764.5 608.3L764.5 606.3L764.5 631.9L764.8 566.6L765.0 614.4L765.0 598.8L765.3 572.6L765.4 639.5L765.5 573.5L765.5 605.6L765.8 654.5L765.9 563.0L766.0 582.9L766.0 582.2L766.3 569.0L766.3 642.9L766.5 608.5L766.5 598.4L766.6 665.7L766.7 576.4L767.0 586.9L767.0 581.2L767.1 571.3L767.2 629.0L767.5 605.6L767.5 605.8L767.6 659.6L767.7 568.3L768.0 618.0L768.0 599.6L768.2 576.3L768.5 639.3L768.5 622.3L768.5 645.0L768.6 577.5L768.7 663.2L769.0 608.1L769.0 585.2L769.2 685.4L769.5 593.5L769.5 605.8L769.5 653.7L769.9 572.1L770.0 616.1L770.0 629.6L770.4 576.7L770.5 660.7L770.5 607.4L770.5 593.1L770.6 638.9L770.7 571.2L771.0 591.8L771.0 599.3L771.5 588.2L771.5 666.5L771.5 602.2L771.6 573.7L771.9 646.4L772.0 584.0L772.0 575.5L772.3 635.9L772.5 591.1L772.5 569.1L772.6 662.5L772.8 562.6L773.0 592.5L773.0 611.8L773.1 575.2L773.1 650.4L773.5 605.8L773.5 640.7L773.7 641.4L774.0 555.6L774.0 571.5L774.1 656.7L774.4 566.5L774.5 591.8L774.5 612.8L774.8 575.6L774.9 656.5L775.0 616.0L775.0 609.5L775.3 565.4L775.4 700.0L775.5 587.8L775.5 581.9L775.6 576.0L775.8 645.2L776.0 609.9L776.0 587.9L776.2 564.5L776.4 699.2L776.5 603.2L776.5 579.8L776.7 577.4L776.7 642.7L777.0 594.0L777.0 592.1L777.3 679.4L777.3 571.8L777.5 618.7L777.5 606.3L777.6 644.6L777.7 564.1L778.0 586.6L778.0 611.3L778.3 651.1L778.4 560.5L778.5 608.4L778.5 618.9L778.7 573.1L778.8 663.1L779.0 588.6L779.0 604.6L779.1 565.0L779.3 688.6L779.5 607.3L779.5 607.4L779.6 676.6L779.9 567.3L780.0 654.9L780.0 596.1L780.4 650.7L780.4 569.5L780.5 579.3L780.5 571.1L780.8 659.5L781.0 584.5L781.0 589.1L781.2 667.6L781.4 580.1L781.5 627.1L781.5 614.5L781.8 570.4L781.9 656.1L782.0 597.3L782.0 638.0L782.1 667.4L782.5 570.2L782.5 570.6L782.5 592.9L782.7 574.5L782.9 665.8L783.0 596.8L783.0 596.3L783.1 572.2L783.1 679.4L783.5 588.9L783.5 593.4L783.8 559.7L783.9 677.4L784.0 578.6L784.0 687.9L784.1 580.4L784.5 628.4L784.5 595.7L784.9 578.4L785.0 636.3L785.0 598.0L785.0 576.2L785.3 655.8L785.4 565.9L785.5 635.6L785.5 614.2L785.6 576.5L785.8 651.1L786.0 580.9L786.0 590.8L786.2 643.9L786.5 572.5L786.5 594.6L786.6 573.1L786.8 700.0L787.0 598.0L787.0 629.7L787.2 648.2L787.5 572.2L787.5 583.5L787.6 674.6L787.7 572.9L788.0 634.6L788.0 615.0L788.1 657.8L788.4 576.3L788.5 602.4L788.5 700.0L788.6 580.0L789.0 615.6L789.0 653.5L789.1 568.4L789.5 594.4L789.5 625.8L789.6 574.4L789.8 690.6L790.0 607.9L790.0 610.1L790.0 590.5L790.3 655.1L790.5 606.3L790.5 591.5L790.8 655.6L790.8 569.8L791.0 598.2L791.0 578.3L791.0 637.4L791.4 567.8L791.5 613.0L791.5 612.1L791.7 700.0L791.7 577.9L792.0 586.8L792.0 597.1L792.2 700.0L792.3 577.5L792.5 589.2L792.5 612.7L792.7 675.5L792.9 584.1L793.0 594.1L793.0 582.7L793.2 580.6L793.4 677.6L793.5 597.5L793.5 638.8L793.7 666.3L793.9 583.6L794.0 613.0L794.0 596.6L794.3 660.6L794.5 573.6L794.5 564.4L794.6 700.0L794.8 560.2L795.0 626.5L795.0 625.6L795.1 572.3L795.3 637.1L795.5 599.9L795.5 609.1L795.7 579.7L795.8 657.4L796.0 611.4L796.0 622.6L796.0 569.4L796.1 639.7L796.5 596.0L796.5 609.6L796.6 575.5L796.9 656.1L797.0 582.5L797.0 624.0L797.1 657.3L797.2 577.0L797.5 610.3L797.5 582.9L797.7 574.8L797.8 692.8L798.0 589.9L798.0 597.7L798.0 679.3L798.1 578.4L798.5 619.9L798.5 649.4L798.8 673.1L799.0 576.7L799.0 624.2L799.1 593.4L799.2 654.8L799.5 608.6L799.5 600.2L799.6 570.4L799.7 662.1L800.0 622.5L800.0 601.5L800.4 560.5L800.5 670.1L800.5 638.1L800.9 673.4L801.0 572.6L801.0 599.9L801.0 614.5L801.1 568.7L801.4 700.0L801.5 596.3L801.5 643.3L801.7 571.5L801.8 700.0L802.0 656.8L802.0 603.7L802.2 671.7L802.5 578.8L802.5 588.5L802.5 635.4L802.6 576.0L802.8 646.6L803.0 577.2L803.0 563.4L803.1 644.1L803.5 600.0L803.5 568.5L803.6 675.9L804.0 598.8L804.0 580.4L804.0 645.8L804.2 577.5L804.5 622.1L804.5 614.2L804.6 576.5L804.7 664.3L805.0 597.2L805.0 629.6L805.4 648.7L805.4 565.6L805.5 599.3L805.5 595.3L805.7 579.7L805.9 674.7L806.0 613.6L806.0 585.6L806.0 577.8L806.3 655.2L806.5 609.6L806.5 586.9L806.7 673.1L806.7 582.8L807.0 587.0L807.0 591.8L807.0 579.8L807.1 700.0L807.5 588.2L807.5 578.6L807.8 700.0L807.8 565.5L808.0 581.0L808.0 574.7L808.5 670.3L808.5 581.7L808.6 679.3L808.7 571.3L809.0 600.2L809.0 586.5L809.3 658.1L809.4 578.5L809.5 619.9L809.5 595.5L809.7 572.2L809.7 682.4L810.0 650.4L810.0 617.7L810.2 650.7L810.5 567.9L810.5 614.3L810.5 627.5L810.6 579.0L810.9 673.2L811.0 602.1L811.0 599.8L811.1 700.0L811.3 564.9L811.5 610.0L811.5 598.3L811.7 569.6L811.8 669.7L812.0 637.2L812.0 678.1L812.0 700.0L812.3 567.7L812.5 601.8L812.5 653.0L812.6 585.9L812.8 678.5L813.0 591.3L813.0 586.8L813.3 575.2L813.4 698.6L813.5 594.7L813.5 572.3L813.6 690.3L814.0 616.6L814.0 597.8L814.1 696.6L814.4 571.7L814.5 677.6L814.5 632.9L814.9 659.4L815.0 570.9L815.0 649.0L815.0 627.9L815.3 571.0L815.4 658.9L815.5 605.4L815.5 619.4L815.7 663.5L815.9 572.2L816.0 612.6L816.0 643.5L816.0 573.8L816.1 691.3L816.5 584.0L816.5 619.5L816.8 636.2L816.8 558.9L817.0 580.1L817.0 568.0L817.3 659.0L817.5 589.8L817.5 609.2L817.5 700.0L818.0 587.9L818.0 605.1L818.0 612.5L818.2 659.5L818.3 572.2L818.5 611.1L818.5 602.0L818.6 697.9L818.7 581.2L819.0 595.2L819.0 586.8L819.2 567.2L819.2 692.4L819.5 580.5L819.5 639.3L819.6 678.5L819.7 574.7L820.0 622.7L820.0 607.4L820.0 669.6L820.4 584.1L820.5 611.2L820.5 599.6L820.6 573.7L820.9 685.5L821.0 595.3L821.0 594.1L821.1 675.3L821.2 562.8L821.5 607.0L821.5 592.6L821.8 564.9L821.9 663.5L822.0 616.4L822.0 626.8L822.2 680.3L822.4 581.1L822.5 611.3L822.5 695.3L822.9 580.7L823.0 603.7L823.0 624.9L823.0 676.9L823.4 564.3L823.5 584.1L823.5 604.4L823.6 684.8L823.9 576.1L824.0 609.5L824.0 637.5L824.1 684.0L824.4 567.2L824.5 602.8L824.5 580.1L824.6 556.3L825.0 643.2L825.0 582.6L825.0 602.8L825.2 652.5L825.4 577.5L825.5 606.1L825.5 578.1L825.6 700.0L825.9 561.0L826.0 574.3L826.0 606.4L826.1 667.5L826.2 567.9L826.5 638.2L826.5 614.9L826.5 678.1L826.8 580.2L827.0 583.0L827.0 628.1L827.2 572.1L827.4 679.7L827.5 600.1L827.5 612.5L827.6 661.7L827.9 567.7L828.0 626.6L828.0 631.7L828.1 570.0L828.5 646.5L828.5 588.4L828.6 700.0L828.9 561.8L829.0 620.7L829.0 586.3L829.2 678.0L829.3 572.7L829.5 609.5L829.5 594.9L829.7 579.7L829.8 700.0L830.0 600.8L830.0 598.7L830.3 576.9L830.4 700.0L830.5 587.3L830.5 605.2L830.6 579.7L830.8 668.4L831.0 611.8L831.0 620.9L831.2 646.5L831.3 586.8L831.5 618.9L831.5 648.7L831.7 568.6L831.9 664.5L832.0 594.0L832.0 637.8L832.2 565.5L832.4 664.4L832.5 597.7L832.5 599.1L832.6 563.3L832.9 677.0L833.0 638.5L833.0 594.6L833.1 574.9L833.4 658.7L833.5 584.7L833.5 616.6L833.6 569.1L833.6 644.8L834.0 596.1L834.0 632.3L834.0 573.0L834.3 671.0L834.5 604.2L834.5 611.4L834.7 663.3L834.9 576.9L835.0 613.7L835.0 583.1L835.1 662.6L835.4 566.6L835.5 587.2L835.5 669.4L835.5 679.2L835.6 573.5L836.0 585.4L836.0 580.8L836.2 681.5L836.3 578.6L836.5 617.2L836.5 662.4L836.6 575.3L837.0 667.0L837.0 597.2L837.0 603.3L837.0 700.0L837.2 571.0L837.5 588.1L837.5 573.0L837.5 571.8L837.7 684.8L838.0 590.3L838.0 664.3L838.3 581.2L838.5 686.3L838.5 621.3L838.6 700.0L838.8 573.3L839.0 601.2L839.0 641.7L839.2 570.9L839.3 700.0L839.5 598.5L839.5 634.6L839.6 700.0L839.9 565.4L840.0 574.6L840.0 605.4L840.2 571.3L840.3 671.2L840.5 600.8L840.5 572.5L840.9 560.0L840.9 636.9L841.0 598.4L841.0 588.3L841.2 566.9L841.5 645.8L841.5 623.6L841.5 637.7L841.7 694.1L841.9 570.4L842.0 635.5L842.0 635.1L842.3 654.3L842.5 569.3L842.5 574.6L842.6 568.7L842.9 650.8L843.0 627.8L843.0 640.1L843.1 561.6L843.4 650.3L843.5 614.9L843.5 598.5L843.6 695.6L843.8 570.4L844.0 591.6L844.0 628.8L844.3 667.3L844.4 576.0L844.5 595.6L844.5 630.7L844.6 700.0L844.7 580.4L845.0 595.0L845.0 599.1L845.2 676.8L845.2 567.7L845.5 603.8L845.5 621.9L845.5 700.0L845.6 570.4L846.0 626.1L846.0 599.6L846.0 656.1L846.2 575.2L846.5 608.0L846.5 580.5L846.5 626.8L846.9 562.6L847.0 581.0L847.0 587.1L847.3 664.7L847.4 566.5L847.5 658.4L847.5 598.3L847.6 688.6L847.8 571.9L848.0 599.5L848.0 648.3L848.3 569.3L848.5 590.1L848.5 581.2L848.6 673.6L848.9 574.6L849.0 625.3L849.0 628.1L849.0 700.0L849.4 575.0L849.5 588.9L849.5 630.3L849.5 694.9L849.9 567.6L850.0 574.0L850.0 604.0L850.0 678.8L850.4 572.8L850.5 611.8L850.5 607.5L850.8 691.3L850.9 577.7L851.0 579.1L851.0 573.5L851.2 700.0L851.5 563.1L851.5 590.9L851.5 606.2L851.5 700.0L851.8 560.8L852.0 644.9L852.0 602.9L852.2 572.3L852.4 643.1L852.5 619.5L852.5 596.7L852.9 668.6L852.9 574.4L853.0 585.2L853.0 580.5L853.0 573.1L853.2 663.8L853.5 631.8L853.5 597.9L853.7 661.1L853.8 564.9L854.0 588.1L854.0 572.3L854.5 673.7L854.5 638.7L854.5 646.0L854.6 563.2L854.8 655.9L855.0 590.8L855.0 597.0L855.2 563.7L855.3 700.0L855.5 608.4L855.5 589.5L855.6 641.2L855.9 573.4L856.0 614.5L856.0 594.8L856.0 577.8L856.2 649.2L856.5 591.8L856.5 617.0L856.6 573.9L856.9 688.0L857.0 589.4L857.0 609.8L857.3 700.0L857.5 564.4L857.5 571.4L857.7 676.5L858.0 564.7L858.0 564.2L858.4 700.0L858.5 670.3L858.5 604.1L858.6 564.5L858.8 660.8L859.0 607.0L859.0 635.9L859.2 570.8L859.5 644.5L859.5 610.5L859.5 611.8L859.5 567.5L859.6 691.9L860.0 603.8L860.0 621.4L860.2 700.0L860.3 576.6L860.5 613.0L860.5 607.5L860.9 566.6L861.0 660.6L861.0 649.1L861.1 563.3L861.5 599.1L861.5 580.4L861.7 563.7L861.7 667.2L862.0 589.7L862.0 584.0L862.2 649.2L862.2 568.7L862.5 575.8L862.5 592.9L862.7 558.9L862.8 678.3L863.0 581.9L863.0 582.6L863.1 572.8L863.4 652.2L863.5 615.3L863.5 599.4L863.7 700.0L863.9 574.5L864.0 602.1L864.0 664.9L864.4 573.3L864.4 700.0L864.5 634.4L864.5 601.9L864.8 698.4L864.9 563.7L865.0 592.9L865.0 601.8L865.1 700.0L865.2 569.1L865.5 597.5L865.5 600.7L865.7 662.8L865.8 573.1L866.0 645.9L866.0 609.8L866.0 649.2L866.1 571.4L866.5 635.5L866.5 616.8L866.7 563.1L866.8 672.5L867.0 585.4L867.0 565.0L867.2 681.2L867.5 619.5L867.5 660.5L867.7 575.4L868.0 594.8L868.0 605.5L868.3 572.4L868.4 672.8L868.5 606.7L868.5 599.5L868.5 689.9L868.5 561.5L869.0 596.5L869.0 574.1L869.1 570.2L869.3 672.4L869.5 600.3L869.5 655.8L869.7 566.6L869.7 700.0L870.0 594.0L870.0 568.6L870.1 657.4L870.5 567.7L870.5 638.6L870.5 607.5L870.8 670.9L870.9 569.4L871.0 617.8L871.0 665.9L871.2 568.6L871.5 588.5L871.5 639.3L871.5 682.3L871.8 572.8L872.0 599.8L872.0 582.7L872.1 700.0L872.4 561.5L872.5 605.0L872.5 635.5L873.0 700.0L873.0 562.7L873.0 608.1L873.2 575.4L873.2 662.4L873.5 644.2L873.5 593.1L873.6 576.8L874.0 700.0L874.0 620.5L874.2 700.0L874.3 568.7L874.5 606.2L874.5 613.4L874.9 700.0L875.0 571.8L875.0 611.2L875.0 578.8L875.4 700.0L875.5 564.7L875.5 584.6L875.7 647.1L875.7 563.1L876.0 609.0L876.0 610.0L876.1 563.2L876.4 676.0L876.5 638.8L876.5 593.4L876.6 638.0L877.0 563.0L877.0 608.1L877.0 601.8L877.1 667.2L877.4 569.0L877.5 643.9L877.5 674.7L877.6 570.8L877.6 700.0L878.0 596.9L878.0 581.2L878.2 570.6L878.3 697.8L878.5 610.8L878.5 593.4L878.7 642.6L878.9 565.6L879.0 607.5L879.0 600.3L879.1 558.9L879.3 672.5L879.5 608.9L879.5 612.2L879.8 563.2L880.0 677.3L880.0 570.1L880.0 569.2L880.1 681.0L880.5 585.0L880.5 616.6L880.6 572.7L881.0 670.7L881.0 627.6L881.1 660.2L881.2 563.4L881.5 623.9L881.5 613.6L881.6 700.0L882.0 572.1L882.0 581.7L882.2 677.0L882.4 565.3L882.5 652.6L882.5 609.8L882.5 662.1L882.9 561.7L883.0 593.6L883.0 618.1L883.0 700.0L883.1 575.9L883.5 615.2L883.5 612.8L883.6 572.3L883.8 681.8L884.0 592.9L884.0 650.7L884.4 671.3L884.4 560.2L884.5 646.2L884.5 615.1L884.8 572.8L884.9 655.0L885.0 626.7L885.0 645.2L885.1 656.5L885.3 567.5L885.5 600.1L885.5 614.6L885.7 570.2L885.8 700.0L886.0 575.6L886.0 591.4L886.1 693.5L886.2 562.7L886.5 580.6L886.5 601.3L886.8 571.4L886.8 678.0L887.0 602.9L887.0 656.7L887.2 663.0L887.3 567.7L887.5 649.9L887.5 646.0L887.7 563.9L887.8 676.6L888.0 583.8L888.0 594.3L888.2 700.0L888.4 565.7L888.5 577.2L888.5 598.2L888.5 658.4L888.7 562.8L889.0 614.4L889.0 646.4L889.2 552.2L889.3 674.1L889.5 579.5L889.5 647.6L889.7 658.5L889.9 568.3L890.0 617.9L890.0 589.7L890.1 692.4L890.3 578.4L890.5 632.9L890.5 605.4L890.7 567.7L890.8 672.7L891.0 657.7L891.0 614.0L891.0 571.0L891.3 666.3L891.5 608.3L891.5 590.0L891.9 560.1L891.9 671.1L892.0 624.1L892.0 627.4L892.3 660.7L892.5 562.0L892.5 578.1L892.5 597.6L892.8 673.9L892.9 565.1L893.0 621.9L893.0 612.8L893.0 580.9L893.2 698.3L893.5 608.3L893.5 584.9L893.6 556.0L893.6 642.2L894.0 602.2L894.0 596.4L894.4 697.1L894.4 567.9L894.5 586.7L894.5 585.9L894.5 561.9L894.9 700.0L895.0 598.1L895.0 634.2L895.2 556.7L895.3 665.8L895.5 618.4L895.5 620.1L895.5 680.5L895.9 567.0L896.0 609.5L896.0 626.2L896.3 556.9L896.4 687.1L896.5 633.2L896.5 584.3L896.6 692.9L897.0 572.2L897.0 624.1L897.0 609.9L897.1 561.1L897.2 684.6L897.5 598.0L897.5 575.7L897.7 693.9L897.9 566.6L898.0 580.6L898.0 580.2L898.1 672.9L898.4 569.6L898.5 606.2L898.5 600.3L898.7 563.2L898.8 700.0L899.0 626.1L899.0 640.9L899.3 654.3L899.4 561.2L899.5 620.9L899.5 646.6L899.5 560.2L899.6 666.4L900.0 620.1L900.0 582.6L900.3 692.0L900.4 561.6L900.5 603.7L900.5 607.2L900.8 559.4L900.8 700.0L901.0 579.8L901.0 659.5L901.3 569.8L901.5 678.2L901.5 611.3L901.5 591.8L901.7 661.2L901.9 563.8L902.0 611.4L902.0 631.1L902.2 687.8L902.3 559.2L902.5 608.7L902.5 601.9L902.7 558.3L902.7 677.2L903.0 614.4L903.0 644.0L903.0 667.9L903.3 570.8L903.5 606.5L903.5 602.8L903.7 682.1L904.0 552.6L904.0 580.5L904.1 693.8L904.4 564.5L904.5 616.4L904.5 623.9L904.6 551.9L904.7 700.0L905.0 606.8L905.0 608.9L905.0 559.0L905.2 668.6L905.5 585.9L905.5 621.9L905.6 559.2L905.8 700.0L906.0 605.3L906.0 648.8L906.1 673.8L906.3 571.0L906.5 588.5L906.5 600.5L906.5 660.9L906.7 564.1L907.0 646.5L907.0 578.1L907.1 686.4L907.3 566.0L907.5 593.5L907.5 638.6L907.8 700.0L908.0 564.6L908.0 600.1L908.0 608.7L908.2 688.2L908.3 571.0L908.5 602.1L908.5 571.2L908.7 673.6L908.9 563.6L909.0 605.2L909.0 583.8L909.0 563.8L909.4 700.0L909.5 588.4L909.5 633.4L909.7 700.0L909.9 569.5L910.0 585.8L910.0 587.8L910.2 564.7L910.4 651.1L910.5 608.3L910.5 607.7L910.5 700.0L910.9 568.1L911.0 580.3L911.0 649.5L911.0 700.0L911.2 567.2L911.5 604.6L911.5 600.4L911.6 572.0L911.7 680.5L912.0 625.3L912.0 592.0L912.0 565.5L912.1 700.0L912.5 609.3L912.5 619.7L912.7 667.7L912.9 563.5L913.0 570.8L913.0 607.0L913.2 700.0L913.3 565.4L913.5 615.6L913.5 650.6L913.7 560.7L913.9 700.0L914.0 585.4L914.0 608.9L914.5 700.0L914.5 571.0L914.5 573.3L914.5 585.5L914.6 673.9L914.7 563.6L915.0 621.0L915.0 631.4L915.3 671.1L915.3 560.9L915.5 628.7L915.5 627.3L915.7 660.3L915.9 570.8L916.0 651.6L916.0 694.0L916.1 569.1L916.5 591.4L916.5 588.7L916.6 681.1L916.6 565.1L917.0 580.8L917.0 585.5L917.2 697.2L917.4 564.3L917.5 646.0L917.5 614.4L917.5 672.5L917.7 569.4L918.0 642.6L918.0 615.3L918.1 700.0L918.1 570.0L918.5 583.7L918.5 617.9L918.7 570.7L918.7 677.5L919.0 627.5L919.0 579.3L919.1 555.6L919.3 656.8L919.5 604.2L919.5 600.0L919.7 563.7L919.7 700.0L920.0 617.8L920.0 615.4L920.1 565.7L920.3 676.7L920.5 586.6L920.5 624.7L920.8 659.8L921.0 577.7L921.0 572.9L921.4 700.0L921.5 611.0L921.5 588.3L921.6 689.0L921.9 556.3L922.0 583.6L922.0 607.8L922.2 565.9L922.3 700.0L922.5 600.4L922.5 626.1L922.7 560.9L922.9 687.6L923.0 574.8L923.0 573.2L923.1 566.1L923.3 700.0L923.5 630.6L923.5 597.9L923.9 558.5L923.9 676.2L924.0 633.8L924.0 592.8L924.1 563.1L924.2 665.7L924.5 608.7L924.5 638.2L924.7 566.2L924.8 700.0L925.0 574.1L925.0 610.5L925.1 569.5L925.5 680.2L925.5 611.1L925.5 621.7L925.8 555.1L925.8 700.0L926.0 575.9L926.0 572.1L926.2 700.0L926.3 564.3L926.5 617.9L926.5 607.4L926.7 560.4L926.9 695.4L927.0 596.3L927.0 640.5L927.1 557.2L927.5 700.0L927.5 622.5L927.5 638.0L927.5 700.0L927.7 566.0L928.0 631.6L928.0 583.6L928.0 552.4L928.1 666.9L928.5 572.4L928.5 595.4L928.5 556.0L928.9 667.4L929.0 594.6L929.0 608.5L929.1 564.7L929.4 676.9L929.5 653.8L929.5 598.7L929.6 559.6L929.8 690.5L930.0 611.0L930.0 567.7L930.3 700.0L930.4 562.8L930.5 617.9L930.5 608.4L930.6 700.0L930.6 560.1L931.0 572.5L931.0 593.3L931.0 570.9L931.0 700.0L931.5 617.5L931.5 598.0L931.8 558.1L931.9 700.0L932.0 578.8L932.0 578.4L932.1 669.9L932.4 558.4L932.5 639.8L932.5 585.5L933.0 693.4L933.0 559.3L933.0 596.1L933.0 631.2L933.1 562.1L933.2 659.4L933.5 603.7L933.5 640.6L933.5 561.1L933.7 700.0L934.0 607.1L934.0 640.9L934.1 561.7L934.4 700.0L934.5 573.0L934.5 637.3L934.5 700.0L935.0 565.8L935.0 572.5L935.0 594.2L935.0 700.0L935.3 552.3L935.5 622.9L935.5 668.3L935.6 551.5L935.7 700.0L936.0 632.6L936.0 597.3L936.1 569.5L936.2 700.0L936.5 571.8L936.5 588.5L936.8 689.7L936.8 556.8L937.0 667.5L937.0 673.1L937.1 700.0L937.2 565.4L937.5 586.2L937.5 618.6L937.7 564.2L937.8 700.0L938.0 578.0L938.0 594.5L938.3 700.0L938.5 562.7L938.5 591.7L938.5 659.1L938.5 700.0L938.9 557.5L939.0 606.0L939.0 619.5L939.2 563.4L939.2 659.1L939.5 577.1L939.5 632.0L939.7 561.7L940.0 700.0L940.0 642.9L940.0 603.1L940.4 648.0L940.4 564.8L940.5 606.9L940.5 600.3L940.5 556.0L940.9 660.5L941.0 592.4L941.0 678.7L941.3 688.2L941.4 552.1L941.5 576.1L941.5 598.7L941.6 563.5L941.9 646.7L942.0 605.4L942.0 573.2L942.0 562.7L942.4 691.2L942.5 592.3L942.5 628.3L942.8 566.3L942.8 689.1L943.0 611.9L943.0 586.0L943.0 677.6L943.3 563.2L943.5 649.3L943.5 600.6L943.7 697.5L943.8 570.5L944.0 621.3L944.0 626.2L944.2 676.2L944.4 551.9L944.5 580.8L944.5 591.9L944.8 694.5L945.0 555.9L945.0 595.0L945.0 615.5L945.2 673.8L945.4 558.4L945.5 665.3L945.5 602.5L945.6 679.7L945.9 558.3L946.0 594.5L946.0 647.4L946.0 563.6L946.3 686.1L946.5 603.5L946.5 616.9L946.6 558.6L946.9 700.0L947.0 590.8L947.0 605.5L947.2 700.0L947.3 551.3L947.5 614.7L947.5 590.0L947.5 659.2L947.9 562.4L948.0 588.6L948.0 595.3L948.1 655.3L948.1 551.6L948.5 588.6L948.5 601.3L948.5 570.4L948.6 700.0L949.0 598.7L949.0 602.5L949.2 685.1L949.4 567.6L949.5 572.2L949.5 640.2L949.9 686.6L950.0 552.3L950.0 664.0L950.0 592.9L950.2 560.0L950.3 656.3L950.5 578.5L950.5 608.1L950.7 692.5L951.0 568.4L951.0 637.6L951.0 675.6L951.2 561.5L951.3 681.2L951.5 603.3L951.5 580.7L951.7 565.7L951.7 684.3L952.0 617.9L952.0 673.5L952.0 700.0L952.5 565.1L952.5 616.4L952.5 636.3L952.6 681.3L952.8 561.0L953.0 593.1L953.0 610.7L953.2 675.1L953.3 564.7L953.5 620.0L953.5 629.5L953.8 663.5L954.0 564.0L954.0 572.9L954.2 700.0L954.3 563.5L954.5 637.3L954.5 644.7L954.5 666.4L954.8 571.3L955.0 597.4L955.0 608.5L955.1 556.7L955.4 686.8L955.5 575.8L955.5 590.6L955.7 563.1L956.0 666.5L956.0 567.9L956.0 576.8L956.3 561.9L956.5 700.0L956.5 607.8L956.5 571.7L956.6 688.4L957.0 555.5L957.0 572.7L957.1 560.8L957.3 692.3L957.5 638.7L957.5 598.1L957.9 563.3L958.0 700.0L958.0 605.9L958.0 581.7L958.2 560.1L958.4 684.9L958.5 601.8L958.5 608.9L958.5 672.8L958.5 567.6L959.0 628.2L959.0 575.8L959.2 571.2L959.5 700.0L959.5 627.2L959.5 660.3L959.5 565.7L959.7 685.1L960.0 574.4L960.0 561.2L960.2 674.4L960.2 557.4L960.5 612.6L960.5 642.5L960.6 679.3L960.9 558.3L961.0 584.9L961.0 601.7L961.1 688.0L961.4 563.4L961.5 607.4L961.5 593.1L961.6 695.6L961.9 550.2L962.0 610.9L962.0 626.6L962.0 555.1L962.4 699.6L962.5 672.7L962.5 602.3L962.5 655.1L962.9 564.7L963.0 582.9L963.0 573.0L963.0 561.5L963.5 700.0L963.5 575.6L963.5 606.8L963.6 700.0L963.8 557.5L964.0 646.0L964.0 600.5L964.1 666.2L964.4 560.6L964.5 573.8L964.5 578.8L964.8 700.0L964.9 563.6L965.0 618.5L965.0 587.0L965.1 691.3L965.5 568.2L965.5 582.0L965.5 571.0L965.6 561.7L965.7 673.2L966.0 625.1L966.0 645.3L966.1 671.5L966.5 559.2L966.5 619.8L966.5 595.1L967.0 557.4L967.0 686.1L967.0 612.8L967.0 608.0L967.1 700.0L967.2 563.5L967.5 594.1L967.5 570.7L967.7 680.2L967.9 555.0L968.0 613.6L968.0 613.4L968.4 557.5L968.5 682.2L968.5 631.2L968.5 589.4L968.6 700.0L969.0 568.2L969.0 584.0L969.0 581.5L969.3 569.3L969.5 692.0L969.5 590.6L969.5 609.2L969.7 564.7L969.9 654.3L970.0 601.4L970.0 589.5L970.4 700.0L970.4 556.7L970.5 673.8L970.5 616.0L970.6 564.9L970.9 685.3L971.0 585.3L971.0 580.8L971.0 568.2L971.1 700.0L971.5 626.2L971.5 605.5L971.6 568.0L971.7 668.7L972.0 596.8L972.0 640.9L972.1 677.4L972.2 564.8L972.5 587.6L972.5 598.5L972.5 558.0L972.8 687.8L973.0 576.9L973.0 570.0L973.2 567.9L973.3 700.0L973.5 571.0L973.5 563.6L973.6 688.8L974.0 596.0L974.0 590.0L974.1 555.7L974.4 700.0L974.5 613.8L974.5 603.2L974.7 686.4L974.9 560.5L975.0 591.1L975.0 614.9L975.1 686.4L975.4 555.0L975.5 629.3L975.5 682.8L975.9 571.1L976.0 591.6L976.0 622.1L976.0 566.8L976.2 679.4L976.5 589.2L976.5 582.5L976.5 700.0L977.0 562.7L977.0 626.8L977.0 647.1L977.1 554.8L977.1 673.4L977.5 596.9L977.5 595.7L977.7 559.8L977.8 679.6L978.0 594.3L978.0 596.7L978.1 563.6L978.2 700.0L978.5 590.6L978.5 613.3L978.8 700.0L978.9 564.2L979.0 652.2L979.0 595.7L979.0 697.6L979.4 561.6L979.5 584.4L979.5 630.1L979.6 700.0L980.0 552.3L980.0 614.1L980.0 616.5L980.3 564.3L980.3 676.0L980.5 637.1L980.5 586.1L980.8 700.0L980.9 557.4L981.0 596.1L981.0 682.0L981.2 700.0L981.4 561.5L981.5 589.5L981.5 586.4L981.5 663.4L981.9 563.3L982.0 624.8L982.0 612.7L982.2 684.0L982.5 560.2L982.5 619.4L982.5 593.4L982.7 546.1L983.0 696.4L983.0 587.6L983.0 643.7L983.3 565.9L983.4 657.9L983.5 585.4L983.5 596.2L983.7 700.0L983.9 560.1L984.0 603.4L984.0 589.1L984.2 556.6L984.5 681.9L984.5 625.7L984.5 616.9L984.6 688.9L984.7 564.3L985.0 604.5L985.0 614.2L985.4 556.3L985.5 680.1L985.5 584.7L985.5 615.3L985.7 695.9L986.0 549.3L986.0 564.9L986.0 567.7L986.2 554.1L986.3 665.7L986.5 649.0L986.5 596.7L986.8 551.2L987.0 700.0L987.0 582.0L987.0 572.1L987.1 660.0L987.1 568.7L987.5 598.5L987.5 566.4L987.6 550.0L988.0 697.7L988.0 596.3L988.0 593.2L988.2 554.5L988.4 672.9L988.5 587.5L988.5 571.4L988.6 546.3L988.9 688.2L989.0 606.8L989.0 630.0L989.4 690.2L989.5 557.2L989.5 591.0L989.5 692.4L989.7 555.1L990.0 577.0L990.0 602.8L990.4 677.6L990.5 562.6L990.5 595.1L990.5 581.2L990.8 663.0L990.9 559.2L991.0 586.6L991.0 605.2L991.1 556.8L991.5 690.7L991.5 587.1L991.7 558.8L991.7 700.0L992.0 590.2L992.0 579.3L992.4 700.0L992.5 565.9L992.5 605.5L992.5 576.8L992.6 565.3L993.0 700.0L993.0 637.7L993.0 590.9L993.1 554.9L993.3 673.8L993.5 577.0L993.5 564.6L993.6 684.4L994.0 560.1L994.0 607.1L994.0 577.6L994.2 551.5L994.4 700.0L994.5 579.2L994.5 689.3L994.8 563.1L994.9 696.9L995.0 572.5L995.0 609.0L995.3 557.9L995.4 677.4L995.5 600.5L995.5 636.9L995.8 688.0L996.0 561.1L996.0 603.5L996.4 568.6L996.4 700.0L996.5 617.9L996.5 645.1L996.8 560.4L996.8 700.0L997.0 573.8L997.0 607.6L997.2 700.0L997.5 553.9L997.5 574.5L997.5 586.3L997.6 662.4L997.6 559.6L998.0 583.4L998.0 600.6L998.4 676.6L998.4 552.4L998.5 633.5L998.5 598.1L998.9 560.3L998.9 700.0L999.0 575.5L999.0 604.7L999.4 664.9L999.5 563.7L999.5 574.1L999.5 588.6L999.6 700.0L999.8 552.6L1000.0 626.4L1000.0 602.5L1000.1 561.2L1000.3 687.0L1000.3 589.6M586.2 600V76.3M587.4 600V76.3M600.6 575V520.5M681.5 575V398.2M736.8 575V419.0M775.5 575V439.3M806.2 575V415.6M832.0 575V481.8M853.2 575V488.6M871.5 575V514.5M887.9 575V435.3M902.1 575V503.3M915.2 575V457.5M927.1 575V495.9M938.1 575V444.4M948.3 575V506.3M957.7 575V445.3M966.6 575V531.6M974.9 575V475.5M982.7 575V525.5M990.2 575V442.3M741.4 575V535.5M855.5 575V524.7M850.8 575V613.7" stroke="#0000ff" stroke-opacity="0.78"/>
<path d="M49.4 481.9L53.2 472.3L57.6 474.9L62.0 484.5L71.5 469.6L75.9 472.3L79.4 490.6L83.7 544.6L86.3 549.0L94.2 490.6L97.7 487.0L104.6 509.8L107.3 508.0L111.6 536.0L117.7 485.3L121.2 480.0L124.7 481.9L127.5 487.1L131.8 506.3L137.1 529.8L142.3 459.2L144.9 455.7L147.5 466.2L151.0 505.4L155.4 481.0L159.7 493.2L163.2 482.7L166.7 490.6L170.2 512.4L173.7 505.4L178.4 521.1L182.4 497.6L187.6 481.0L192.0 488.8L197.2 518.5L201.6 500.2L207.0 509.2L210.5 538.0L212.2 527.6L214.8 545.0L217.4 518.0L221.8 530.2L227.0 496.2L231.4 506.6L233.1 504.0L236.6 524.0L239.2 510.1L241.0 538.0L244.4 497.9L247.1 507.5L250.5 497.9L254.9 547.6L257.5 536.3L261.9 532.8L267.1 491.8L270.6 511.9L274.9 583.4L276.0 519.5L277.0 519.2L277.9 519.7L278.9 521.1L279.8 529.1L280.7 553.4L281.6 587.8L282.6 539.6L283.5 528.0L284.4 534.7L285.3 569.6L286.2 577.4L287.1 549.2L288.0 538.8L288.8 536.8L289.7 542.9L290.6 549.5L291.4 544.3L292.3 537.3L293.1 538.6L294.0 553.8L294.8 581.7L295.7 558.0L296.5 539.2L297.3 532.8L298.1 533.5L299.0 534.3L299.8 529.6L300.6 526.1L301.4 525.8L302.2 525.6L303.0 520.0L303.8 513.0L304.5 510.2L305.3 515.4L306.1 531.5L306.9 565.4L307.6 578.8L308.4 550.5L309.1 536.1L309.9 528.6L310.6 525.3L311.4 524.3L312.1 523.0L312.9 519.0L313.6 516.6L314.3 521.2L315.1 527.9L315.8 515.7L316.5 501.8L317.2 496.6L317.9 498.1L318.6 503.8L319.3 510.4L320.0 516.7L320.7 523.3L321.4 526.1L322.1 523.8L322.8 521.6L323.5 523.2L324.1 526.1L324.8 528.9L325.5 530.8L326.2 530.5L326.8 526.8L327.5 523.8L328.2 524.3L328.8 527.3L329.5 531.2L330.1 538.4L330.8 554.2L331.4 566.0L332.0 548.9L332.7 535.4L333.3 527.2L333.9 522.7L334.6 521.6L335.2 524.0L335.8 527.5L336.4 529.8L337.1 533.3L337.7 544.7L338.3 564.3L338.9 560.0L339.5 548.1L340.1 544.2L340.7 544.8L341.3 545.4L341.9 540.6L342.5 532.4L343.1 529.6L343.7 540.3L344.3 597.9L344.8 549.9L345.4 525.9L346.0 519.2L346.6 520.1L347.1 523.5L347.7 526.4L348.3 527.5L348.9 527.5L349.4 528.4L350.0 528.9L350.5 531.0L351.1 541.2L351.7 564.0L352.2 565.3L352.8 553.0L353.3 543.1L353.9 533.6L354.4 529.8L354.9 531.6L355.5 537.6L356.0 545.5L356.5 548.8L357.1 545.9L357.6 552.4L358.1 574.5L358.7 570.5L359.2 568.2L359.7 571.2L360.2 559.2L360.8 552.1L361.3 543.3L361.8 534.5L362.3 532.7L362.8 543.4L363.3 565.0L363.8 537.5L364.3 522.4L364.8 520.3L365.3 526.1L365.8 536.3L366.3 546.7L366.8 555.2L367.3 564.6L367.8 574.0L368.3 577.5L368.8 570.3L369.3 562.8L369.8 558.2L370.3 545.2L370.8 529.4L371.2 520.8L371.7 519.1L372.2 520.7L372.7 522.0L373.1 524.4L373.6 530.8L374.1 538.8L374.6 534.8L375.0 524.6L375.5 520.2L376.0 523.0L376.4 529.9L376.9 536.6L377.3 547.9L377.8 569.4L378.3 599.4L378.7 567.8L379.2 548.6L379.6 542.3L380.1 542.2L380.5 547.0L381.0 563.4L381.4 613.3L381.9 581.1L382.3 573.6L382.7 576.2L383.2 581.4L383.6 616.2L384.1 558.3L384.5 542.9L384.9 547.4L385.4 573.1L385.8 628.7L386.2 568.5L386.7 549.3L387.1 537.5L387.5 530.1L387.9 529.4L388.4 537.0L388.8 556.8L389.2 620.7L389.6 578.1L390.0 557.6L390.5 548.9L390.9 539.8L391.3 534.5L391.7 537.9L392.1 550.2L392.5 573.1L392.9 646.2L393.4 565.6L393.8 548.7L394.2 542.3L394.6 542.1L395.0 554.6L395.4 581.6L395.8 548.5L396.2 533.7L396.6 530.8L397.0 533.5L397.4 538.8L397.8 547.0L398.2 561.6L398.6 574.5L399.0 560.6L399.4 552.8L399.7 551.5L400.1 550.3L400.5 548.6L400.9 553.4L401.3 573.4L401.7 594.8L402.1 558.1L402.4 542.8L402.8 536.5L403.2 533.7L403.6 534.3L404.0 540.2L404.3 554.7L404.7 581.0L405.1 584.0L405.5 555.2L405.8 540.3L406.2 533.0L406.6 527.5L407.0 522.9L407.3 520.3L407.7 520.2L408.1 524.0L408.4 533.4L408.8 547.5L409.2 563.6L409.5 582.7L409.9 615.7L410.3 599.4L410.6 560.8L411.0 540.3L411.3 530.8L411.7 529.1L412.0 531.9L412.4 535.6L412.8 541.0L413.1 550.9L413.5 567.5L413.8 580.3L414.2 556.8L414.5 543.2L414.9 540.2L415.2 540.3L415.6 539.9L415.9 541.1L416.3 548.5L416.6 569.1L417.0 574.8L417.3 566.8L417.6 587.0L418.0 572.7L418.3 544.7L418.7 535.6L419.0 537.1L419.3 546.9L419.7 560.2L420.0 560.6L420.4 557.3L420.7 560.6L421.0 577.4L421.4 597.4L421.7 570.7L422.0 573.9L422.4 596.3L422.7 565.1L423.0 549.2L423.3 542.2L423.7 538.8L424.0 539.2L424.3 545.0L424.6 558.8L425.0 586.8L425.3 593.0L425.6 561.5L425.9 542.5L426.3 534.5L426.6 534.6L426.9 539.3L427.2 543.3L427.5 544.0L427.9 548.8L428.2 566.9L428.5 596.7L428.8 556.4L429.1 539.8L429.4 535.3L429.8 539.2L430.1 549.0L430.4 560.0L430.7 566.4L431.0 566.6L431.3 563.4L431.6 560.5L431.9 562.1L432.2 571.0L432.5 593.3L432.9 668.3L433.2 595.7L433.5 581.1L433.8 569.2L434.1 555.2L434.4 546.7L434.7 546.7L435.0 555.1L435.3 568.9L435.6 583.5L435.9 582.6L436.2 561.1L436.5 550.5L436.8 551.2L437.1 562.4L437.4 586.9L437.7 640.8L438.0 591.8L438.3 577.1L438.6 580.2L438.9 604.5L439.1 602.6L439.4 563.2L439.7 547.4L440.0 543.7L440.3 549.5L440.6 564.2L440.9 590.6L441.2 671.7L441.5 590.1L441.8 573.6L442.0 566.2L442.3 557.3L442.6 551.1L442.9 556.0L443.2 581.7L443.5 606.1L443.7 563.5L444.0 552.4L444.3 554.5L444.6 571.0L444.9 603.0L445.2 605.4L445.4 613.1L445.7 589.9L446.0 577.2L446.3 578.3L446.6 587.3L446.8 592.3L447.1 579.3L447.4 569.2L447.7 562.0L447.9 562.0L448.2 574.8L448.5 574.8L448.8 560.4L449.0 562.1L449.3 577.6L449.6 581.6L449.8 576.1L450.1 580.4L450.4 601.4L450.6 604.3L450.9 565.1L451.2 548.4L451.5 541.8L451.7 543.9L452.0 557.0L452.3 568.0L452.5 553.3L452.8 545.8L453.0 545.0L453.3 546.4L453.6 549.5L453.8 558.0L454.1 577.8L454.4 609.4L454.6 580.4L454.9 566.2L455.1 560.4L455.4 555.6L455.7 552.5L455.9 553.7L456.2 557.3L456.4 554.5L456.7 543.8L457.0 536.6L457.2 537.1L457.5 548.4L457.7 585.3L458.0 571.6L458.2 548.0L458.5 543.9L458.7 550.5L459.0 566.9L459.3 591.1L459.5 603.8L459.8 597.5L460.0 591.6L460.3 604.4L460.5 643.4L460.8 586.8L461.0 574.7L461.3 573.9L461.5 575.6L461.8 577.0L462.0 581.3L462.3 578.9L462.5 562.7L462.7 547.5L463.0 537.9L463.2 535.4L463.5 538.1L463.7 541.4L464.0 544.7L464.2 552.4L464.5 573.4L464.7 602.4L464.9 574.6L465.2 579.7L465.4 643.6L465.7 593.3L465.9 578.8L466.2 579.4L466.4 583.7L466.6 583.0L466.9 573.7L467.1 563.4L467.4 558.9L467.6 565.4L467.8 592.2L468.1 623.5L468.3 586.7L468.5 574.7L468.8 567.6L469.0 564.6L469.2 569.4L469.5 577.9L469.7 559.3L469.9 545.5L470.2 543.6L470.4 548.8L470.6 555.0L470.9 561.6L471.1 575.3L471.3 603.3L471.6 573.2L471.8 557.5L472.0 554.4L472.3 553.4L472.5 549.7L472.7 547.4L473.0 549.2L473.2 552.9L473.4 554.8L473.6 555.3L473.9 557.6L474.1 562.2L474.3 565.0L474.5 563.9L474.8 562.3L475.0 561.0L475.2 564.5L475.4 577.8L475.7 588.8L475.9 575.9L476.1 566.6L476.3 565.3L476.6 574.5L476.8 595.8L477.0 572.5L477.2 556.4L477.5 556.1L477.7 569.5L477.9 593.2L478.1 601.4L478.3 586.9L478.6 577.0L478.8 578.0L479.0 589.4L479.2 589.3L479.4 576.8L479.7 574.7L479.9 578.0L480.1 572.6L480.3 564.2L480.5 563.8L480.7 570.8L481.0 579.1L481.2 583.5L481.4 584.4L481.6 585.7L481.8 596.0L482.0 633.4L482.2 579.0L482.5 557.9L482.7 549.6L482.9 549.3L483.1 556.6L483.3 571.8L483.5 593.3L483.7 623.7L483.9 626.4L484.2 591.7L484.4 579.5L484.6 577.7L484.8 566.8L485.0 556.0L485.2 555.6L485.4 565.7L485.6 582.3L485.8 571.0L486.0 562.7L486.2 564.6L486.5 571.8L486.7 575.0L486.9 566.4L487.1 556.6L487.3 553.0L487.5 558.9L487.7 571.0L487.9 567.6L488.1 562.1L488.3 558.2L488.5 555.5L488.7 560.9L488.9 573.4L489.1 577.5L489.3 565.0L489.5 553.9L489.7 551.9L489.9 558.8L490.1 570.7L490.3 579.0L490.5 583.5L490.7 600.4L490.9 635.2L491.1 586.0L491.3 567.4L491.5 562.6L491.7 570.4L491.9 591.8L492.1 617.9L492.3 642.4L492.5 618.9L492.7 584.4L492.9 572.3L493.1 569.6L493.3 569.9L493.5 571.2L493.7 575.2L493.9 583.7L494.1 589.1L494.3 589.1L494.5 593.7L494.7 597.1L494.9 601.0L495.1 630.5L495.3 603.9L495.5 578.8L495.7 571.6L495.9 568.5L496.1 563.8L496.3 558.1L496.4 554.4L496.6 555.8L496.8 567.4L497.0 597.5L497.2 670.8L497.4 638.6L497.6 632.4L497.8 590.8L498.0 581.1L498.2 583.3L498.4 571.8L498.6 559.1L498.7 555.6L498.9 557.1L499.1 557.3L499.3 557.5L499.5 566.7L499.7 605.3L499.9 593.4L500.1 569.1L500.2 570.7L500.4 598.6L500.6 604.5L500.8 573.1L501.0 568.2L501.2 572.8L501.4 574.1L501.6 566.7L501.7 560.3L501.9 560.2L502.1 561.7L502.3 558.6L502.5 555.3L502.7 555.2L502.8 558.8L503.0 563.5L503.2 564.3L503.4 566.1L503.6 575.9L503.8 590.5L503.9 593.6L504.1 580.5L504.3 569.1L504.5 566.9L504.7 571.8L504.9 578.8L505.0 586.9L505.2 593.7L505.4 585.2L505.6 577.4L505.8 579.1L505.9 582.2L506.1 567.7L506.3 556.0L506.5 557.2L506.7 572.0L506.8 605.1L507.0 653.5L507.2 616.3L507.4 594.8L507.6 585.2L507.7 582.1L507.9 575.7L508.1 566.0L508.3 559.6L508.4 562.7L508.6 581.7L508.8 622.0L509.0 655.0L509.1 598.4L509.3 568.5L509.5 563.6L509.7 579.1L509.8 597.9L510.0 577.1L510.2 572.4L510.4 577.0L510.5 584.5L510.7 579.6L510.9 572.8L511.1 577.0L511.2 579.6L511.4 566.6L511.6 556.8L511.8 552.0L511.9 552.8L512.1 562.1L512.3 579.8L512.4 571.0L512.6 557.3L512.8 550.6L513.0 547.8L513.1 551.6L513.3 564.0L513.5 581.6L513.6 582.3L513.8 568.2L514.0 560.5L514.1 561.7L514.3 567.8L514.5 572.7L514.7 579.2L514.8 596.6L515.0 625.4L515.2 588.5L515.3 571.3L515.5 563.5L515.7 559.5L515.8 558.4L516.0 561.4L516.2 568.7L516.3 574.7L516.5 571.0L516.7 565.0L516.8 563.7L517.0 565.0L517.2 565.4L517.3 570.4L517.5 589.3L517.7 596.3L517.8 586.3L518.0 597.5L518.2 644.4L518.3 603.4L518.5 589.4L518.6 586.5L518.8 584.3L519.0 578.3L519.1 569.1L519.3 562.8L519.5 561.4L519.6 562.4L519.8 561.9L520.0 563.0L520.1 569.5L520.3 581.9L520.4 596.2L520.6 610.8L520.8 598.8L520.9 576.7L521.1 569.9L521.2 581.0L521.4 607.4L521.6 584.4L521.7 574.8L521.9 578.1L522.0 591.4L522.2 618.6L522.4 604.1L522.5 578.9L522.7 571.2L522.8 581.5L523.0 652.6L523.2 575.0L523.3 554.5L523.5 548.3L523.6 551.9L523.8 569.7L524.0 620.6L524.1 583.2L524.3 580.5L524.4 592.7L524.6 584.8L524.7 573.7L524.9 568.8L525.1 569.4L525.2 573.6L525.4 584.5L525.5 579.5L525.7 561.1L525.8 555.2L526.0 559.2L526.1 567.0L526.3 566.8L526.5 562.0L526.6 563.3L526.8 574.3L526.9 599.5L527.1 688.6L527.2 597.7L527.4 580.8L527.5 579.4L527.7 577.6L527.8 567.7L528.0 567.9L528.1 589.7L528.3 616.2L528.5 577.0L528.6 568.2L528.8 565.9L528.9 563.3L529.1 561.3L529.2 565.2L529.4 582.7L529.5 598.3L529.7 579.0L529.8 570.0L530.0 563.6L530.1 557.1L530.3 550.6L530.4 545.5L530.6 544.0L530.7 548.7L530.9 563.3L531.0 597.5L531.2 629.4L531.3 593.8L531.5 585.9L531.6 584.4L531.8 584.9L531.9 593.4L532.1 626.4L532.2 616.9L532.4 584.6L532.5 569.5L532.7 562.4L532.8 559.4L533.0 558.1L533.1 560.3L533.3 567.5L533.4 575.7L533.5 579.9L533.7 584.6L533.8 590.5L534.0 583.2L534.1 578.4L534.3 588.7L534.4 636.2L534.6 593.6L534.7 576.3L534.9 578.2L535.0 586.0L535.2 589.7L535.3 585.7L535.4 575.4L535.6 571.6L535.7 573.4L535.9 574.1L536.0 570.2L536.2 570.4L536.3 584.4L536.5 638.6L536.6 608.4L536.7 602.2L536.9 617.2L537.0 596.7L537.2 581.1L537.3 577.2L537.5 579.3L537.6 585.2L537.7 591.6L537.9 588.8L538.0 578.7L538.2 573.5L538.3 579.9L538.5 610.4L538.6 601.8L538.7 573.5L538.9 563.2L539.0 563.4L539.2 573.5L539.3 590.8L539.4 611.9L539.6 687.6L539.7 603.3L539.9 587.0L540.0 588.7L540.2 596.5L540.3 604.6L540.4 619.7L540.6 606.0L540.7 582.7L540.9 575.2L541.0 585.5L541.1 604.4L541.3 583.2L541.4 577.9L541.5 582.3L541.7 586.6L541.8 600.6L542.0 667.3L542.1 602.6L542.2 584.9L542.4 580.0L542.5 580.8L542.7 587.3L542.8 605.4L542.9 656.3L543.1 582.7L543.2 563.6L543.3 561.9L543.5 576.3L543.6 601.7L543.7 575.0L543.9 562.6L544.0 563.5L544.2 576.1L544.3 599.8L544.4 590.0L544.6 572.0L544.7 565.0L544.8 570.6L545.0 601.3L545.1 611.6L545.2 585.9L545.4 590.2L545.5 584.8L545.6 574.9L545.8 567.4L545.9 558.8L546.1 556.0L546.2 561.4L546.3 570.9L546.5 574.5L546.6 578.5L546.7 582.8L546.9 581.1L547.0 583.5L547.1 595.4L547.3 593.6L547.4 582.2L547.5 589.4L547.7 632.0L547.8 614.6L547.9 582.2L548.1 568.6L548.2 565.5L548.3 571.7L548.4 592.0L548.6 649.7L548.7 589.4L548.8 570.5L549.0 561.3L549.1 557.6L549.2 559.2L549.4 566.9L549.5 583.9L549.6 624.2L549.8 607.2L549.9 584.0L550.0 576.1L550.2 581.0L550.3 614.6L550.4 588.7L550.5 568.8L550.7 568.0L550.8 576.1L550.9 584.9L551.1 597.3L551.2 608.8L551.3 576.4L551.4 563.2L551.6 562.4L551.7 565.7L551.8 567.6L552.0 566.7L552.1 563.8L552.2 560.4L552.3 559.4L552.5 564.8L552.6 579.9L552.7 601.3L552.9 587.9L553.0 572.2L553.1 568.8L553.2 577.8L553.4 601.2L553.5 604.8L553.6 581.0L553.8 572.2L553.9 572.2L554.0 576.1L554.1 578.8L554.3 575.6L554.4 569.4L554.5 565.1L554.6 561.6L554.8 556.9L554.9 554.2L555.0 557.5L555.1 565.1L555.3 567.3L555.4 565.5L555.5 566.6L555.6 572.2L555.8 584.4L555.9 607.8L556.0 627.8L556.1 615.6L556.3 613.1L556.4 639.6L556.5 619.4L556.6 581.3L556.8 565.2L556.9 558.6L557.0 557.5L557.1 560.2L557.3 567.5L557.4 580.7L557.5 595.9L557.6 600.5L557.8 603.4L557.9 615.0L558.0 601.4L558.5 558.7L558.6 555.1L558.7 558.6L558.9 569.2L559.0 585.8L559.1 613.0L559.2 670.7L559.3 610.3L559.5 601.3L559.6 609.3L559.7 635.2L559.8 634.1L560.0 602.8L560.1 583.2L560.2 573.5L560.3 576.0L560.4 594.8L560.6 620.8L560.7 603.5L560.8 606.3L560.9 628.6L561.0 587.4L561.2 571.8L561.3 571.0L561.4 571.2L561.5 562.5L561.6 556.9L561.8 558.5L561.9 566.4L562.0 581.4L562.2 606.3L562.5 585.4L562.6 579.5L562.7 581.1L562.8 599.9L563.0 594.3L563.1 564.3L563.2 553.3L563.3 553.9L563.4 564.3L563.6 583.8L563.7 604.7L563.8 609.0L563.9 604.6L564.0 595.5L564.1 587.8L564.4 609.8L564.5 607.9L564.6 600.8L564.7 608.3L564.8 625.2L565.0 641.9L565.1 628.8L565.2 618.5L565.3 629.1L565.4 613.7L565.5 589.3L565.7 579.5L565.8 583.6L565.9 607.1L566.0 625.6L566.2 577.8L566.5 597.3L566.6 606.4L566.7 588.2L566.8 592.0L566.9 602.6L567.1 595.8L567.2 590.8L567.3 579.8L567.4 569.5L567.5 565.1L567.6 564.4L568.0 602.9L568.1 598.4L568.2 577.6L568.3 574.5L568.4 576.6L568.5 582.6L568.7 601.7L569.0 563.9L569.1 561.8L569.2 559.1L569.3 557.9L569.4 561.0L569.6 568.3L569.7 578.9L569.8 588.4L569.9 588.5L570.0 586.9L570.2 670.1L570.5 578.4L570.6 574.4L570.7 584.5L570.8 615.6L570.9 625.0L571.0 588.1L571.5 568.2L571.6 565.6L571.7 569.4L571.8 581.4L571.9 603.0L572.0 627.7L572.4 586.7L572.5 587.4L572.6 603.4L572.7 625.2L572.8 613.5L572.9 583.3L573.0 566.0L573.1 559.9L573.5 622.4L573.6 595.5L573.7 579.9L573.8 584.3L573.9 605.9L574.0 613.9L574.5 559.4L574.6 558.9L574.9 583.1L575.0 577.8L575.1 575.9L575.2 582.0L575.3 601.1L575.4 592.1L575.5 567.2L575.6 560.8L576.0 584.5L576.1 586.8L576.2 596.7L576.3 594.2L576.4 587.7L576.5 590.7L576.7 601.0L576.9 590.2L577.0 593.0L577.3 636.9L577.5 579.3L577.6 564.0L577.7 558.5L577.8 560.5L577.9 567.8L578.0 575.0L578.3 557.4L578.4 560.0L578.5 579.2L578.6 634.2L579.0 588.8L579.1 583.8L579.4 570.8L579.5 571.0L579.6 571.2L579.7 568.4L579.8 563.7L579.9 559.6L580.0 557.8L580.3 602.4L580.4 581.9L580.5 568.5L580.6 565.5L581.0 608.8L581.1 590.5L581.3 573.5L581.5 582.9L581.6 589.2L582.0 570.2L582.1 568.9L582.2 565.3L582.3 562.8L582.4 567.6L582.5 584.5L582.7 622.2L582.9 581.9L583.0 574.7L583.4 597.5L583.5 593.7L583.8 644.8L583.9 601.7L584.0 591.5L584.5 575.1L584.6 572.1L584.7 570.9L585.0 580.9L585.1 592.0L585.2 643.4L585.5 569.3L585.6 567.8L586.0 609.6L586.1 586.6L586.2 577.5L586.5 599.6L586.6 584.3L586.7 578.4L586.9 585.0L587.0 584.1L587.1 583.4L587.3 588.7L587.5 570.4L587.6 565.8L587.8 566.5L588.0 561.2L588.1 562.2L588.4 567.9L588.5 566.7L588.5 566.5L588.9 579.3L589.0 589.3L589.4 631.6L589.5 590.1L589.7 570.7L589.9 580.4L590.0 593.3L590.1 593.6L590.3 573.1L590.4 576.2L590.5 574.0L590.6 572.1L590.9 671.4L591.0 592.6L591.1 581.4L591.4 700.0L591.5 628.4L591.6 600.5L591.8 590.8L592.0 611.5L592.1 595.5L592.2 574.6L592.4 582.2L592.5 584.1L592.7 583.9L592.9 596.5L593.0 591.4L593.2 605.9L593.5 579.2L593.6 576.5L594.0 607.0L594.1 646.2L594.3 568.9L594.4 570.1L594.5 574.7L594.9 624.2L595.0 589.3L595.1 574.6L595.4 553.5L595.5 554.3L595.6 562.0L595.7 569.4L595.9 559.4L596.0 560.5L596.3 587.2L596.5 565.2L596.6 555.9L596.7 554.2L597.0 591.0L597.0 611.0L597.4 562.0L597.5 566.2L597.9 609.5L598.0 598.2L598.1 587.8L598.3 569.2L598.4 574.1L598.5 580.3L598.7 595.2L599.0 594.4L599.1 592.4L599.3 590.8L599.4 641.2L599.5 607.5L599.7 574.5L600.0 653.2L600.1 611.2L600.2 589.8L600.3 620.1L600.4 614.6L600.5 596.2L600.7 615.9L601.0 593.4L601.1 581.1L601.2 573.9L601.4 581.4L601.5 604.8L601.8 556.0L602.0 565.9L602.0 582.9L602.2 619.3L602.5 565.6L602.6 562.8L602.8 574.2L602.9 563.7L603.0 571.9L603.2 622.3L603.5 588.8L603.6 581.7L603.6 578.4L604.0 660.8L604.1 589.2L604.3 560.7L604.4 565.7L604.5 571.2L604.7 630.3L605.0 574.8L605.1 577.0L605.2 594.2L605.5 580.1L605.6 583.8L605.7 606.6L605.9 592.6L606.0 592.1L606.3 593.4L606.4 587.2L606.5 581.9L606.8 614.1L607.0 577.0L607.0 599.8L607.1 612.3L607.3 590.8L607.5 600.7L607.6 595.1L607.8 588.9L608.0 594.8L608.1 602.6L608.2 664.5L608.4 603.1L608.5 593.7L608.7 617.3L608.9 573.3L609.0 569.3L609.3 564.9L609.4 578.4L609.5 595.9L609.7 640.1L609.9 581.2L610.0 564.5L610.2 550.7L610.4 577.5L610.5 604.4L610.6 629.5L610.8 599.2L610.9 599.3L611.0 594.5L611.2 621.8L611.5 602.6L611.5 609.1L611.6 613.8L611.9 589.2L612.0 583.8L612.1 579.8L612.4 599.3L612.4 592.4L612.5 595.5L612.7 631.3L612.9 584.1L613.0 576.2L613.1 572.7L613.3 613.1L613.4 591.5L613.5 593.2L613.8 569.9L613.9 582.5L614.0 601.8L614.1 655.7L614.4 600.7L614.5 597.6L614.7 582.6L615.0 607.6L615.1 601.8L615.5 569.3L615.6 578.6L615.7 606.0L616.0 558.2L616.0 566.0L616.4 603.5L616.5 613.4L616.9 594.2L617.0 590.5L617.2 639.5L617.3 581.8L617.5 619.4L617.6 609.9L617.8 569.1L618.0 574.7L618.0 581.6L618.4 620.8L618.5 593.4L618.8 565.0L619.0 580.0L619.1 585.1L619.3 647.9L619.5 596.4L619.5 596.6L619.6 629.4L619.9 568.7L620.0 557.9L620.1 555.2L620.5 581.5L620.6 582.7L620.6 580.1L620.9 614.5L621.0 612.9L621.0 623.3L621.4 565.5L621.5 569.3L621.6 580.3L621.9 599.1L622.0 580.4L622.0 568.9L622.3 700.0L622.5 619.0L622.6 604.5L622.7 571.5L623.0 587.6L623.0 596.0L623.3 614.1L623.4 586.5L623.5 602.4L623.6 614.4L624.0 587.1L624.0 596.0L624.1 616.7L624.3 562.2L624.5 582.4L624.6 578.9L624.7 601.9L624.9 594.7L625.0 604.4L625.1 604.9L625.4 578.5L625.5 580.1L625.5 593.2L625.9 656.5L626.0 600.4L626.1 578.2L626.2 578.3L626.4 566.8L626.5 566.5L626.8 604.6L627.0 588.4L627.0 627.2L627.2 603.1L627.4 633.3L627.5 626.5L627.6 611.2L627.7 582.9L627.9 619.1L628.0 580.0L628.1 573.5L628.3 622.3L628.4 600.9L628.5 603.5L628.7 594.0L628.8 668.6L629.0 633.1L629.0 596.7L629.2 617.2L629.3 590.0L629.5 593.6L629.5 577.5L629.6 570.6L629.8 613.4L630.0 586.6L630.1 608.8L630.2 641.3L630.3 587.0L630.5 595.8L630.6 591.2L630.6 585.4L631.0 613.7L631.1 615.5L631.2 582.4L631.4 586.9L631.5 581.0L631.6 591.1L631.9 573.9L631.9 578.8L632.0 595.0L632.1 656.9L632.4 573.8L632.5 563.2L632.6 559.8L632.9 593.5L633.0 608.3L633.3 609.3L633.4 585.0L633.5 572.4L633.7 630.6L633.9 595.7L634.0 594.9L634.3 609.3L634.5 572.8L634.6 573.6L634.8 600.8L635.0 584.7L635.1 594.7L635.2 676.0L635.5 567.3L635.5 578.4L635.7 619.2L636.0 617.6L636.0 618.0L636.4 572.3L636.5 573.6L636.5 592.0L636.9 639.8L637.0 596.2L637.1 560.6L637.5 641.0L637.6 606.5L637.8 579.1L638.0 660.1L638.0 605.7L638.1 588.6L638.2 637.7L638.5 591.6L638.5 592.2L638.7 700.0L638.9 606.6L639.0 603.9L639.3 637.9L639.5 571.3L639.5 574.8L640.0 591.8L640.0 608.9L640.1 628.2L640.4 576.8L640.5 579.8L640.6 590.0L640.9 620.6L641.0 594.6L641.0 578.7L641.1 575.1L641.2 614.9L641.4 593.1L641.5 611.6L641.8 581.8L642.0 628.8L642.0 621.9L642.1 663.0L642.4 570.5L642.4 573.4L642.5 593.9L642.6 627.2L642.7 593.1L643.0 601.4L643.0 599.7L643.3 681.2L643.5 589.0L643.6 579.5L643.6 579.4L643.8 614.5L644.0 580.7L644.0 582.5L644.4 645.8L644.5 619.9L644.5 594.3L644.9 585.2L644.9 595.6L645.0 633.3L645.5 594.7L645.5 580.4L645.6 570.8L645.9 644.8L646.0 610.7L646.0 580.1L646.1 568.5L646.5 652.8L646.6 600.0L646.8 626.6L646.9 580.1L647.0 575.7L647.4 611.8L647.5 603.9L647.5 571.9L647.6 562.4L648.0 606.3L648.0 585.5L648.2 570.5L648.4 622.7L648.5 596.2L648.5 620.6L648.7 665.9L648.9 582.4L649.0 584.3L649.1 600.2L649.2 640.7L649.5 604.9L649.6 585.2L649.6 573.4L649.8 609.1L649.9 583.5L650.0 584.5L650.1 577.5L650.3 605.0L650.4 589.1L650.5 588.2L650.6 561.0L650.9 591.9L650.9 586.3L651.0 580.1L651.4 665.0L651.5 613.5L651.6 595.0L651.9 611.4L652.0 636.2L652.4 576.7L652.5 591.0L652.6 599.8L652.7 595.3L652.9 637.4L653.0 609.1L653.1 586.3L653.2 572.2L653.3 610.8L653.5 572.8L653.5 572.6L653.7 616.9L654.0 610.5L654.0 603.9L654.2 568.3L654.5 614.3L654.5 600.4L654.8 579.4L654.9 599.4L655.0 601.7L655.1 601.5L655.3 695.3L655.5 636.0L655.6 627.1L655.6 644.9L655.9 575.6L656.0 626.5L656.0 655.3L656.1 659.3L656.5 586.7L656.5 587.1L656.6 638.3L657.0 596.4L657.1 589.3L657.1 585.3L657.2 628.4L657.5 594.9L657.5 590.0L657.7 628.7L658.0 583.2L658.0 592.9L658.2 591.5L658.3 635.6L658.5 596.4L658.5 585.9L658.7 608.3L658.9 568.4L659.0 568.8L659.0 579.2L659.5 637.3L659.5 676.9L659.9 570.6L660.0 570.9L660.0 576.5L660.2 599.6L660.5 571.4L660.5 579.7L660.7 604.8L660.9 579.2L660.9 586.5L661.0 585.1L661.1 584.8L661.2 600.8L661.5 595.8L661.5 602.2L661.6 648.3L661.9 589.1L662.0 596.1L662.0 598.3L662.3 580.8L662.5 655.6L662.5 606.4L662.6 568.5L663.0 619.7L663.0 611.9L663.2 646.2L663.4 574.6L663.5 578.4L663.5 581.8L663.8 594.8L663.9 569.7L664.0 576.0L664.1 575.9L664.1 569.0L664.3 611.1L664.4 598.0L664.5 600.7L664.7 589.7L664.8 653.5L665.0 601.8L665.0 603.3L665.2 618.1L665.4 583.6L665.5 589.0L665.5 584.0L665.6 560.6L665.8 613.3L666.0 604.8L666.0 596.7L666.1 634.8L666.4 583.6L666.5 608.5L666.5 596.6L666.9 573.4L667.0 577.2L667.0 593.5L667.4 645.0L667.5 599.0L667.5 593.6L667.8 615.8L667.9 573.7L668.0 602.9L668.0 589.3L668.1 577.0L668.2 599.7L668.5 589.8L668.5 619.1L668.8 577.9L669.0 601.0L669.0 604.9L669.2 614.5L669.5 583.1L669.5 588.6L669.6 631.2L670.0 581.9L670.1 578.7L670.1 577.5L670.4 643.8L670.5 634.1L670.5 618.8L670.9 572.8L671.0 588.5L671.0 619.6L671.2 594.2L671.5 639.2L671.5 588.9L671.6 583.4L671.8 641.4L672.0 639.0L672.1 604.0L672.1 584.3L672.3 637.9L672.5 600.8L672.5 610.3L672.6 626.6L672.9 594.9L673.0 612.3L673.0 607.3L673.3 590.0L673.5 642.0L673.5 647.0L673.9 564.3L674.0 576.2L674.0 568.9L674.1 649.0L674.5 586.5L674.5 590.3L674.8 621.5L674.9 582.3L675.0 620.4L675.0 603.7L675.1 630.5L675.4 584.1L675.5 625.1L675.5 616.9L675.7 590.0L675.8 618.1L676.0 601.2L676.0 618.6L676.4 633.3L676.5 588.3L676.5 606.1L676.6 607.7L677.0 570.9L677.1 594.1L677.2 567.4L677.5 615.4L677.5 654.7L677.7 662.8L677.8 571.9L678.0 611.9L678.0 611.5L678.2 630.0L678.4 585.0L678.5 620.0L678.5 600.2L678.7 636.0L678.9 572.4L678.9 582.8L679.0 591.9L679.3 700.0L679.5 606.8L679.5 591.8L679.7 615.7L679.8 570.3L680.0 606.3L680.0 589.2L680.2 620.5L680.3 566.7L680.5 596.5L680.5 597.1L680.8 642.2L681.0 573.3L681.0 588.5L681.1 619.6L681.2 571.8L681.5 608.5L681.5 617.5L681.6 656.3L681.7 570.1L682.0 578.6L682.0 592.2L682.1 620.8L682.2 564.1L682.5 577.3L682.5 591.0L682.8 632.0L682.9 583.1L683.0 628.1L683.0 611.9L683.4 644.6L683.5 593.8L683.5 600.2L683.7 580.6L684.0 615.2L684.0 618.1L684.2 583.2L684.5 700.0L684.5 607.6L684.6 584.2L684.9 633.7L685.0 597.2L685.0 591.7L685.1 579.8L685.3 628.0L685.5 609.1L685.5 598.6L685.6 582.9L685.7 659.7L686.0 595.2L686.0 605.0L686.1 616.7L686.2 578.0L686.5 578.2L686.5 587.1L686.9 658.0L687.0 605.6L687.0 598.2L687.1 657.8L687.5 610.5L687.5 597.8L687.6 576.2L687.9 634.0L688.0 607.4L688.0 582.0L688.2 578.4L688.4 634.3L688.5 583.4L688.5 586.6L688.8 626.8L689.0 584.8L689.0 575.4L689.2 611.9L689.5 567.1L689.5 582.3L689.7 666.0L689.8 582.0L690.0 635.7L690.0 614.2L690.2 634.9L690.3 589.5L690.5 593.2L690.5 596.4L690.7 646.8L690.9 579.1L691.0 583.4L691.0 608.4L691.1 661.7L691.4 585.9L691.5 603.5L691.5 595.7L691.6 623.7L691.7 577.0L692.0 592.8L692.0 597.2L692.1 606.7L692.3 575.6L692.5 588.7L692.5 582.6L693.0 639.0L693.0 629.1L693.1 661.4L693.3 579.8L693.5 594.2L693.5 601.2L693.9 647.3L694.0 571.6L694.0 571.8L694.2 631.1L694.5 598.1L694.5 600.2L694.7 590.6L694.9 667.7L695.0 593.4L695.0 574.1L695.1 566.6L695.4 595.0L695.5 591.9L695.5 584.9L695.8 566.0L696.0 597.6L696.0 587.4L696.3 677.2L696.4 572.4L696.5 593.7L696.5 578.9L696.8 569.4L697.0 645.2L697.0 624.8L697.2 563.8L697.5 589.2L697.5 601.3L697.7 648.7L697.8 588.0L698.0 635.3L698.0 605.5L698.1 626.8L698.2 589.8L698.5 607.9L698.5 658.9L698.7 573.1L698.8 700.0L699.0 588.4L699.0 667.4L699.1 680.9L699.4 594.9L699.5 625.4L699.5 649.2L699.6 574.6L700.0 591.3L700.0 581.4L700.1 567.6L700.3 613.8L700.5 582.7L700.5 589.9L700.6 625.8L701.0 595.5L701.0 594.6L701.1 640.7L701.3 573.4L701.5 592.7L701.5 610.6L701.6 573.8L701.9 622.9L702.0 609.6L702.0 601.9L702.4 618.6L702.5 586.9L702.5 592.3L702.5 576.3L703.0 606.1L703.0 608.6L703.3 576.1L703.4 626.2L703.5 614.6L703.5 611.4L703.7 643.8L703.8 599.1L704.0 600.4L704.0 586.4L704.1 581.2L704.4 648.1L704.5 590.0L704.5 582.0L704.8 649.4L705.0 595.9L705.0 590.6L705.0 582.1L705.4 651.1L705.5 601.9L705.5 584.7L705.6 575.8L705.9 638.1L706.0 606.0L706.0 598.7L706.1 650.4L706.2 582.1L706.5 605.5L706.5 599.0L706.7 622.6L707.0 584.6L707.0 586.6L707.1 673.8L707.5 622.5L707.5 642.9L707.7 573.0L708.0 591.2L708.0 610.9L708.1 671.1L708.4 586.0L708.5 614.2L708.5 615.9L708.7 671.1L709.0 567.5L709.0 572.9L709.3 643.5L709.5 582.3L709.5 581.1L709.8 649.6L709.9 574.4L710.0 611.4L710.0 619.4L710.2 644.9L710.3 586.0L710.5 619.8L710.5 623.1L710.9 570.0L711.0 644.8L711.0 620.0L711.1 591.1L711.2 626.0L711.5 607.7L711.5 625.4L711.8 585.2L711.9 646.1L712.0 588.2L712.0 592.0L712.2 667.4L712.4 573.0L712.5 609.5L712.5 594.3L712.8 583.0L712.8 628.1L713.0 583.4L713.0 600.4L713.1 568.3L713.3 647.1L713.5 636.6L713.5 615.9L713.7 665.5L713.9 579.6L714.0 618.3L714.0 605.5L714.3 580.3L714.5 664.8L714.5 596.5L714.5 597.7L714.8 640.3L715.0 633.7L715.0 614.6L715.1 585.0L715.2 620.3L715.5 603.5L715.5 617.8L715.8 644.1L715.9 585.8L716.0 586.9L716.0 621.8L716.1 569.4L716.4 657.0L716.5 592.1L716.5 576.3L716.6 642.8L717.0 590.6L717.0 583.8L717.3 579.0L717.4 651.1L717.5 585.1L717.5 580.5L717.7 571.8L717.9 678.6L718.0 615.2L718.0 608.6L718.1 583.4L718.3 662.3L718.5 621.0L718.5 597.3L718.6 578.6L718.6 629.2L719.0 613.6L719.0 600.8L719.1 619.0L719.2 576.5L719.5 608.6L719.5 602.2L719.7 586.0L719.7 700.0L720.0 589.2L720.0 594.5L720.3 584.7L720.4 692.6L720.5 612.9L720.5 593.8L720.6 577.4L721.0 659.2L721.0 641.6L721.3 573.4L721.5 609.3L721.5 634.7L721.7 651.9L721.8 578.6L722.0 597.4L722.0 597.5L722.3 582.2L722.4 657.6L722.5 616.3L722.5 603.7L722.7 626.6L722.8 569.0L723.0 622.1L723.0 652.8L723.4 580.4L723.5 591.2L723.5 586.5L723.5 580.2L723.9 693.0L724.0 586.2L724.0 574.0L724.1 616.9L724.4 568.6L724.5 592.4L724.5 591.3L724.6 582.2L724.9 644.2L725.0 616.9L725.0 636.3L725.1 646.5L725.3 574.1L725.5 617.3L725.5 626.0L725.8 569.4L726.0 598.0L726.0 680.6L726.2 563.9L726.5 589.5L726.5 609.1L726.7 633.2L726.9 573.0L727.0 580.9L727.0 624.4L727.4 592.2L727.5 594.8L727.5 586.5L727.8 637.2L728.0 587.9L728.0 594.6L728.2 604.7L728.3 559.3L728.5 599.0L728.5 599.4L728.6 567.1L728.7 625.6L729.0 578.2L729.0 588.7L729.3 642.7L729.4 577.0L729.5 614.8L729.5 617.2L729.8 576.7L729.9 654.6L730.0 603.2L730.0 597.7L730.1 572.3L730.2 615.3L730.5 597.0L730.5 572.6L731.0 643.6L731.0 629.4L731.2 583.3L731.4 647.0L731.5 638.0L731.5 593.3L731.6 574.1L731.9 648.7L732.0 609.0L732.0 607.4L732.1 630.9L732.5 573.2L732.5 580.6L732.5 603.1L732.7 586.5L733.0 669.4L733.0 591.8L733.1 662.2L733.2 565.3L733.5 605.4L733.5 598.9L733.7 589.3L733.9 638.1L734.0 637.0L734.0 607.0L734.1 574.4L734.3 631.1L734.5 584.3L734.5 616.2L734.6 663.4L734.8 558.9L735.0 620.1L735.0 627.2L735.4 567.2L735.5 595.2L735.5 606.2L735.6 658.2L735.9 580.6L736.0 586.6L736.0 610.7L736.3 578.7L736.5 673.5L736.5 589.3L736.5 570.8L736.6 644.2L737.0 571.0L737.0 570.3L737.2 634.2L737.5 568.8L737.5 589.3L737.8 660.6L738.0 601.0L738.0 598.6L738.3 589.9L738.4 651.0L738.5 636.9L738.5 653.4L738.9 570.2L739.0 578.8L739.0 582.3L739.1 668.4L739.3 575.4L739.5 584.8L739.5 581.1L739.7 635.2L739.8 566.1L740.0 589.4L740.0 586.6L740.2 644.3L740.3 566.2L740.5 592.5L740.5 588.4L740.8 667.0L741.0 602.6L741.0 602.5L741.3 684.9L741.4 584.9L741.5 595.7L741.5 579.4L741.7 648.1L741.9 575.1L742.0 617.6L742.0 616.6L742.1 640.4L742.4 575.5L742.5 606.6L742.5 600.4L742.5 675.2L742.9 587.4L743.0 588.7L743.0 587.3L743.1 583.7L743.2 633.6L743.5 629.1L743.5 595.0L743.9 591.1L743.9 630.0L744.0 606.7L744.0 603.7L744.1 573.9L744.4 638.3L744.5 587.4L744.5 589.0L744.8 570.3L744.9 624.6L745.0 594.1L745.0 629.0L745.2 635.3L745.5 563.1L745.5 566.8L745.8 674.4L746.0 599.0L746.0 626.7L746.2 638.2L746.5 569.4L746.5 575.6L746.9 632.1L747.0 574.2L747.0 604.3L747.0 644.7L747.1 649.6L747.3 572.0L747.5 617.3L747.5 616.0L747.9 572.3L747.9 627.4L748.0 573.0L748.0 583.0L748.0 579.8L748.4 637.9L748.5 589.5L748.5 576.9L748.9 640.5L749.0 603.0L749.0 599.6L749.2 576.4L749.3 646.5L749.5 638.7L749.5 639.3L749.5 641.6L750.0 578.3L750.0 580.0L750.2 647.9L750.5 586.1L750.5 633.0L750.8 672.1L750.9 575.4L751.0 659.9L751.0 634.1L751.1 661.0L751.5 563.6L751.5 580.1L751.6 576.7L751.7 655.3L752.0 610.5L752.0 617.9L752.1 562.7L752.2 672.4L752.5 608.2L752.5 654.5L752.5 575.6L752.9 696.1L753.0 657.3L753.0 607.3L753.1 700.0L753.2 575.9L753.5 598.6L753.5 602.9L753.7 566.0L753.8 700.0L754.0 593.7L754.0 655.4L754.2 570.4L754.5 601.4L754.5 603.7L754.6 663.9L754.7 561.1L755.0 596.6L755.0 599.3L755.2 580.3L755.5 638.7L755.5 601.1L755.6 562.4L755.6 682.4L756.0 615.3L756.0 600.4L756.3 563.0L756.3 632.5L756.5 631.9L756.5 579.5L756.5 574.4L756.9 657.4L757.0 633.9L757.0 605.1L757.0 647.1L757.2 571.9L757.5 579.8L757.5 585.8L757.8 642.5L757.9 571.2L758.0 626.8L758.0 638.1L758.1 653.5L758.5 556.5L758.5 566.3L758.5 585.1L758.6 700.0L758.9 582.7L759.0 600.8L759.0 616.9L759.1 584.2L759.2 634.7L759.5 595.1L759.5 607.0L759.6 573.0L759.7 680.4L760.0 583.1L760.0 575.6L760.3 644.6L760.5 611.2L760.5 612.2L760.8 578.2L760.9 641.2L761.0 591.4L761.0 596.2L761.2 578.6L761.3 669.7L761.5 582.9L761.5 591.4L761.8 612.7L762.0 563.2L762.0 566.0L762.0 585.8L762.0 669.6L762.4 564.1L762.5 638.1L762.5 606.9L762.7 578.7L762.9 642.5L763.0 622.2L763.0 653.9L763.0 700.0L763.4 575.4L763.5 613.8L763.5 641.8L763.7 576.2L764.0 598.1L764.0 590.2L764.1 641.7L764.3 583.9L764.5 607.9L764.5 579.4L764.5 570.4L764.7 648.4L765.0 593.0L765.0 581.2L765.0 577.6L765.2 661.7L765.5 590.1L765.5 693.4L765.8 571.2L766.0 591.2L766.0 593.2L766.3 650.7L766.4 579.2L766.5 601.5L766.5 605.9L766.7 572.9L766.8 692.3L767.0 605.9L767.0 585.9L767.1 584.9L767.4 640.8L767.5 597.1L767.5 592.4L767.7 657.9L767.8 582.1L768.0 601.3L768.0 610.1L768.3 682.2L768.5 566.3L768.5 588.0L768.5 635.1L768.9 571.8L768.9 692.9L769.0 624.1L769.0 606.4L769.3 671.0L769.4 574.1L769.5 581.5L769.5 635.3L769.8 563.3L769.9 635.5L770.0 634.6L770.0 599.2L770.1 700.0L770.3 579.6L770.5 596.7L770.5 596.5L770.7 591.2L770.9 669.3L771.0 593.9L771.0 587.4L771.2 678.4L771.2 569.3L771.5 594.0L771.5 589.6L771.6 559.5L771.8 662.6L772.0 603.5L772.0 598.3L772.1 683.8L772.2 572.7L772.5 593.9L772.5 583.3L772.7 700.0L772.9 571.2L773.0 599.2L773.0 606.4L773.0 672.0L773.4 566.8L773.5 610.2L773.5 581.2L773.6 641.8L773.8 572.0L774.0 598.0L774.0 591.4L774.1 566.9L774.3 662.5L774.5 572.8L774.5 588.8L774.6 632.6L774.9 574.0L775.0 609.3L775.0 615.6L775.1 577.7L775.3 698.2L775.5 598.1L775.5 608.3L775.5 700.0L775.8 568.9L776.0 670.4L776.0 647.8L776.2 700.0L776.5 592.0L776.5 666.1L776.7 684.9L776.9 580.3L777.0 604.0L777.0 613.5L777.2 666.5L777.3 577.7L777.5 595.4L777.5 589.7L777.6 562.6L777.9 700.0L778.0 611.8L778.0 611.1L778.2 584.4L778.5 643.3L778.5 617.9L778.5 613.9L778.6 644.1L778.7 587.9L779.0 600.9L779.0 601.4L779.1 563.8L779.4 674.9L779.5 617.6L779.5 588.3L779.6 653.8L779.8 576.0L780.0 619.5L780.0 598.2L780.1 580.6L780.3 676.9L780.5 599.5L780.5 612.4L780.7 662.2L780.8 570.5L781.0 634.1L781.0 601.1L781.3 690.8L781.4 565.5L781.5 599.1L781.5 603.0L781.8 582.1L781.9 690.5L782.0 589.6L782.0 575.1L782.2 573.5L782.5 646.4L782.5 597.0L782.5 592.2L782.6 577.5L782.8 663.6L783.0 603.3L783.0 626.2L783.3 565.5L783.3 700.0L783.5 604.3L783.5 603.7L783.6 649.7L783.8 576.5L784.0 588.0L784.0 586.4L784.1 570.4L784.3 628.5L784.5 593.1L784.5 594.4L784.6 635.5L784.9 571.5L785.0 607.8L785.0 642.9L785.1 580.5L785.3 670.3L785.5 615.5L785.5 612.5L786.0 661.8L786.0 581.1L786.0 585.3L786.0 654.2L786.4 566.0L786.5 595.0L786.5 588.8L786.9 675.6L787.0 609.1L787.0 609.9L787.1 572.9L787.2 675.5L787.5 670.0L787.5 630.8L787.7 583.3L787.9 638.6L788.0 611.9L788.0 646.5L788.4 577.2L788.4 686.5L788.5 608.0L788.5 651.5L788.6 562.3L788.9 683.3L789.0 573.3L789.0 589.2L789.2 666.5L789.3 566.7L789.5 576.7L789.5 632.2L789.8 580.7L789.9 643.6L790.0 608.9L790.0 585.2L790.3 581.7L790.4 629.5L790.5 610.4L790.5 612.8L790.6 678.3L790.6 571.5L791.0 588.9L791.0 653.8L791.2 660.5L791.4 569.8L791.5 590.7L791.5 604.5L791.7 652.4L791.8 570.8L792.0 599.8L792.0 606.3L792.2 648.7L792.3 579.6L792.5 646.5L792.5 647.8L792.6 574.8L792.9 652.0L793.0 638.1L793.0 606.8L793.1 692.2L793.4 571.9L793.5 586.1L793.5 588.8L793.7 659.0L794.0 577.1L794.0 583.6L794.0 617.3L794.0 677.8L794.5 566.3L794.5 599.9L794.5 659.9L794.6 578.5L795.0 614.9L795.0 580.5L795.2 655.0L795.2 569.3L795.5 593.1L795.5 645.8L795.6 655.3L795.9 586.9L796.0 598.0L796.0 630.8L796.3 591.6L796.3 637.5L796.5 635.8L796.5 588.9L796.8 576.4L796.9 656.6L797.0 585.5L797.0 633.5L797.1 642.0L797.2 561.6L797.5 591.9L797.5 617.2L797.7 583.9L797.7 685.8L798.0 637.0L798.0 678.6L798.3 700.0L798.3 581.1L798.5 590.8L798.5 597.3L798.7 551.7L798.8 686.8L799.0 601.7L799.0 597.9L799.3 570.1L799.4 655.1L799.5 606.7L799.5 583.6L799.9 636.2L800.0 623.2L800.0 597.2L800.2 576.8L800.3 673.0L800.5 605.7L800.5 581.1L800.7 695.5L800.8 560.0L801.0 615.2L801.0 591.7L801.4 582.1L801.4 693.1L801.5 595.7L801.5 614.9L801.7 660.8L801.9 564.5L802.0 597.4L802.0 598.2L802.1 566.3L802.2 632.6L802.5 601.0L802.5 586.3L802.7 685.8L802.9 570.9L803.0 592.5L803.0 614.9L803.0 579.5L803.4 674.8L803.5 599.9L803.5 622.4L803.6 670.2L803.7 581.3L804.0 591.8L804.0 605.0L804.2 575.5L804.4 671.7L804.5 600.1L804.5 614.4L804.5 665.8L805.0 573.0L805.0 613.3L805.1 656.2L805.2 569.0L805.5 598.7L805.5 699.7L806.0 584.4L806.0 587.3L806.0 632.6L806.3 700.0L806.3 571.8L806.5 626.0L806.5 601.2L806.7 662.5L806.9 565.8L807.0 658.1L807.0 599.8L807.1 557.9L807.4 678.5L807.5 579.9L807.5 642.5L807.7 700.0L807.8 579.4L808.0 634.7L808.0 625.9L808.1 654.0L808.5 558.8L808.5 576.8L808.6 676.9L808.9 558.4L809.0 593.0L809.0 607.0L809.3 673.0L809.5 587.0L809.5 619.0L809.5 623.5L809.7 665.2L810.0 574.8L810.0 598.3L810.0 596.0L810.3 673.5L810.3 571.1L810.5 599.2L810.5 597.0L810.7 566.6L810.8 666.8L811.0 598.0L811.0 642.5L811.1 649.9L811.1 574.4L811.5 602.1L811.5 567.9L812.0 675.3L812.0 568.6L812.0 621.9L812.1 569.0L812.5 650.4L812.5 601.6L812.5 623.2L812.7 568.7L812.7 649.5L813.0 590.2L813.0 623.7L813.3 579.1L813.5 659.0L813.5 618.1L813.5 606.1L813.7 573.5L813.8 677.4L814.0 594.4L814.0 675.4L814.0 676.0L814.5 571.4L814.5 571.6L814.5 581.0L814.7 666.5L815.0 602.3L815.0 597.7L815.2 654.2L815.3 564.1L815.5 603.1L815.5 603.9L815.7 698.4L815.8 581.2L816.0 603.3L816.0 580.6L816.2 570.4L816.4 663.0L816.5 590.1L816.5 583.1L816.8 581.2L816.9 664.7L817.0 625.2L817.0 604.2L817.1 570.3L817.1 661.8L817.5 624.0L817.5 651.4L817.8 567.9L817.9 669.1L818.0 581.4L818.0 605.1L818.1 656.0L818.4 581.3L818.5 623.7L818.5 638.9L818.7 566.4L819.0 610.7L819.0 581.6L819.0 559.6L819.5 655.3L819.5 641.5L819.5 606.7L819.5 647.8L820.0 576.7L820.0 632.5L820.2 564.1L820.4 693.2L820.5 582.5L820.5 587.4L820.9 573.8L820.9 634.8L821.0 584.4L821.0 590.0L821.1 655.3L821.3 581.2L821.5 599.4L821.5 671.9L821.9 575.1L822.0 672.6L822.0 587.0L822.0 603.3L822.1 564.7L822.5 669.8L822.5 589.0L822.5 580.9L822.6 670.4L822.8 571.0L823.0 589.7L823.0 617.5L823.1 577.0L823.3 633.6L823.5 598.6L823.5 566.1L823.9 674.3L824.0 647.9L824.0 665.6L824.5 573.5L824.5 619.7L824.5 601.8L824.8 571.9L825.0 685.4L825.0 602.4L825.2 573.3L825.4 687.4L825.5 583.7L825.5 597.5L825.6 641.5L825.9 571.9L826.0 583.7L826.0 593.7L826.3 647.1L826.5 567.7L826.5 597.3L826.5 617.8L826.7 589.5L826.9 664.1L827.0 637.6L827.0 609.5L827.1 575.7L827.3 658.1L827.5 589.1L827.5 576.8L827.8 662.4L827.8 567.0L828.0 610.7L828.0 599.9L828.1 658.9L828.4 570.1L828.5 631.8L828.5 607.9L828.8 554.5L829.0 660.7L829.0 598.4L829.0 621.4L829.0 700.0L829.2 568.5L829.5 633.3L829.5 597.2L829.6 570.6L829.6 680.5L830.0 611.2L830.0 585.7L830.2 559.9L830.3 674.4L830.5 607.2L830.5 627.1L830.5 654.5L830.8 572.5L831.0 608.6L831.0 587.9L831.1 572.5L831.3 650.6L831.5 604.5L831.5 622.1L831.7 685.5L831.8 563.9L832.0 621.8L832.0 588.0L832.1 564.1L832.1 645.7L832.5 605.1L832.5 576.4L832.9 658.6L833.0 597.2L833.0 580.7L833.2 668.4L833.4 566.2L833.5 623.8L833.5 593.9L833.5 566.2L833.9 663.2L834.0 600.9L834.0 633.3L834.2 700.0L834.4 570.8L834.5 600.6L834.5 594.7L834.5 566.7L835.0 644.5L835.0 635.5L835.0 591.8L835.2 675.7L835.4 577.0L835.5 636.0L835.5 601.5L835.6 700.0L835.7 574.4L836.0 581.3L836.0 608.4L836.2 574.4L836.4 689.4L836.5 609.9L836.5 626.7L836.6 652.8L837.0 573.1L837.0 569.0L837.0 565.9L837.4 665.5L837.5 632.7L837.5 605.2L837.5 567.2L837.6 644.8L838.0 593.2L838.0 595.7L838.2 571.5L838.4 651.9L838.5 571.6L838.5 596.4L838.7 692.4L838.7 575.5L839.0 644.9L839.0 576.2L839.0 567.3L839.3 674.1L839.5 654.3L839.5 696.6L839.8 573.7L840.0 573.9L840.0 567.8L840.1 560.8L840.2 700.0L840.5 604.1L840.5 608.4L840.7 651.0L840.7 561.3L841.0 641.0L841.0 640.3L841.2 561.9L841.2 661.5L841.5 628.4L841.5 620.6L841.7 556.1L841.9 694.4L842.0 592.4L842.0 639.0L842.3 574.4L842.5 670.2L842.5 617.2L842.8 578.5L842.9 650.7L843.0 630.8L843.0 643.5L843.1 573.7L843.4 700.0L843.5 700.0L843.5 650.4L843.9 574.8L844.0 662.6L844.0 604.0L844.0 618.8L844.1 648.2L844.5 568.2L844.5 579.8L844.5 631.3L844.6 656.6L844.8 571.8L845.0 597.8L845.0 605.7L845.1 642.4L845.2 560.0L845.5 620.6L845.5 608.2L845.8 700.0L845.9 562.4L846.0 589.5L846.0 614.6L846.2 583.6L846.3 669.4L846.5 654.9L846.5 609.0L846.6 655.2L846.9 569.7L847.0 600.2L847.0 606.6L847.1 654.3L847.3 575.0L847.5 634.2L847.5 623.0L847.6 564.3L847.9 674.9L848.0 592.1L848.0 613.4L848.3 670.4L848.5 567.6L848.5 637.3L848.5 602.2L848.9 700.0L848.9 566.6L849.0 612.1L849.0 597.6L849.2 575.4L849.3 698.6L849.5 657.9L849.5 632.1L849.7 570.6L849.9 650.3L850.0 618.7L850.0 601.3L850.2 682.2L850.5 583.2L850.5 598.9L850.5 627.5L850.6 668.2L850.9 577.6L851.0 608.0L851.0 643.0L851.1 572.6L851.4 700.0L851.5 621.5L851.5 590.6L851.6 669.0L851.7 576.5L852.0 590.5L852.0 629.7L852.1 679.1L852.4 567.7L852.5 607.5L852.5 603.9L852.6 697.7L853.0 557.6L853.0 582.6L853.0 619.9L853.0 656.7L853.1 580.4L853.5 592.8L853.5 637.1L853.6 573.7L853.8 677.8L854.0 606.1L854.0 600.9L854.3 576.5L854.4 669.3L854.5 620.4L854.5 633.8L854.7 558.6L854.9 642.1L855.0 589.2L855.0 588.1L855.1 564.2L855.3 700.0L855.5 637.4L855.5 631.2L855.6 564.6L855.7 681.0L856.0 633.4L856.0 590.1L856.2 672.9L856.4 553.5L856.5 654.4L856.5 598.4L856.7 577.2L856.8 700.0L857.0 588.8L857.0 621.6L857.0 679.8L857.2 561.2L857.5 578.4L857.5 574.9L857.9 677.8L858.0 584.8L858.0 611.8L858.3 573.2L858.3 665.8L858.5 633.2L858.5 623.1L858.7 685.7L859.0 563.5L859.0 590.0L859.0 591.4L859.2 674.1L859.4 573.5L859.5 584.8L859.5 582.6L859.5 689.2L859.9 571.3L860.0 621.8L860.0 644.1L860.4 571.3L860.4 667.8L860.5 602.3L860.5 590.4L860.7 561.8L860.8 652.9L861.0 577.3L861.0 564.5L861.5 658.3L861.5 616.4L861.7 575.4L862.0 683.0L862.0 604.3L862.0 584.8L862.1 700.0L862.3 558.3L862.5 574.9L862.5 593.2L862.7 556.5L862.9 686.4L863.0 609.3L863.0 612.0L863.0 568.3L863.4 658.6L863.5 596.7L863.5 578.0L863.6 562.5L863.6 687.0L864.0 577.8L864.0 607.3L864.3 700.0L864.4 570.2L864.5 578.0L864.5 592.5L864.8 561.4L864.8 675.6L865.0 579.8L865.0 585.1L865.2 653.2L865.5 571.7L865.5 602.0L865.5 602.4L865.6 572.0L865.7 688.5L866.0 579.2L866.0 582.5L866.4 578.1L866.5 700.0L866.5 596.4L866.5 582.0L866.9 567.8L866.9 654.3L867.0 585.6L867.0 651.2L867.1 571.7L867.2 700.0L867.5 615.6L867.5 597.8L867.9 563.7L868.0 675.0L868.0 579.4L868.0 598.9L868.2 671.8L868.5 560.6L868.5 574.3L868.5 580.1L868.6 579.3L868.7 657.0L869.0 585.6L869.0 600.6L869.2 570.3L869.4 691.2L869.5 587.6L869.5 562.5L869.7 658.3L869.9 556.1L870.0 592.6L870.0 601.1L870.2 559.2L870.3 671.0L870.5 657.2L870.5 577.6L870.8 673.8L870.9 554.8L871.0 587.8L871.0 567.9L871.0 565.8L871.3 646.3L871.5 604.2L871.5 595.8L871.8 676.5L871.9 565.0L872.0 595.3L872.0 574.8L872.1 684.8L872.3 572.7L872.5 608.3L872.5 623.6L872.7 689.4L872.8 574.1L873.0 592.7L873.0 581.0L873.1 700.0L873.2 551.6L873.5 579.3L873.5 594.9L873.6 563.0L873.8 689.2L874.0 594.2L874.0 656.4L874.0 700.0L874.4 559.7L874.5 583.5L874.5 598.0L874.6 568.2L875.0 698.5L875.0 616.0L875.0 645.4L875.0 570.8L875.0 682.8L875.5 587.9L875.5 604.2L875.8 563.2L875.9 700.0L876.0 596.3L876.0 661.0L876.2 560.4L876.5 592.1L876.5 578.8L876.6 699.1L876.7 577.0L877.0 608.6L877.0 608.7L877.3 563.9L877.5 648.2L877.5 598.3L877.5 584.6L877.7 565.5L877.7 656.9L878.0 578.7L878.0 615.6L878.2 700.0L878.2 570.5L878.5 597.5L878.5 618.1L878.5 684.4L878.6 568.1L879.0 649.0L879.0 612.3L879.1 700.0L879.5 574.8L879.5 606.4L879.5 633.9L879.6 571.1L879.9 687.5L880.0 598.1L880.0 625.2L880.1 692.5L880.5 579.8L880.5 585.5L880.5 590.2L880.8 575.4L881.0 681.4L881.0 602.8L881.0 605.7L881.0 668.0L881.3 580.5L881.5 619.6L881.5 587.4L881.7 568.7L881.8 700.0L882.0 582.4L882.0 568.2L882.0 650.0L882.5 589.8L882.5 590.8L882.6 700.0L882.9 568.1L883.0 578.0L883.0 622.7L883.1 563.4L883.2 700.0L883.5 594.2L883.5 591.2L883.9 664.4L884.0 569.2L884.0 610.4L884.0 644.6L884.0 700.0L884.1 567.2L884.5 592.4L884.5 616.5L884.7 700.0L885.0 544.8L885.0 597.3L885.0 610.2L885.3 670.2L885.5 563.6L885.5 596.5L885.8 562.0L886.0 662.2L886.0 626.2L886.2 569.1L886.4 700.0L886.5 604.4L886.5 593.3L886.6 700.0L886.7 572.9L887.0 590.5L887.0 591.4L887.4 564.0L887.4 671.2L887.5 576.5L887.5 592.6L887.6 577.7L887.8 684.1L888.0 580.3L888.0 609.0L888.2 681.5L888.3 571.0L888.5 580.4L888.5 597.6L888.7 571.0L888.8 649.7L889.0 587.3L889.0 585.9L889.0 575.4L889.1 663.0L889.5 609.4L889.5 595.1L889.8 555.4L889.9 687.9L890.0 614.5L890.0 593.6L890.4 700.0L890.5 568.2L890.5 604.6L890.5 571.2L890.6 669.0L890.8 559.9L891.0 608.1L891.0 576.0L891.0 700.0L891.3 568.2L891.5 602.1L891.5 612.7L891.7 700.0L891.8 567.4L892.0 666.7L892.0 641.5L892.1 673.0L892.4 560.8L892.5 600.1L892.5 607.2L892.5 576.2L893.0 665.2L893.0 600.7L893.0 576.2L893.2 554.6L893.3 670.7L893.5 589.2L893.5 596.1L893.6 655.9L893.7 558.5L894.0 588.6L894.0 599.2L894.4 673.8L894.5 563.1L894.5 581.1L894.7 570.9L895.0 683.6L895.0 584.4L895.0 609.0L895.1 700.0L895.3 553.9L895.5 593.9L895.5 593.7L895.7 570.8L896.0 675.3L896.0 615.9L896.0 615.3L896.4 686.1L896.4 568.7L896.5 636.7L896.5 648.7L896.7 666.0L896.7 560.6L897.0 588.1L897.0 566.7L897.4 680.4L897.5 582.8L897.5 654.1L897.7 574.0L897.9 695.9L898.0 594.0L898.0 591.2L898.3 679.9L898.4 555.2L898.5 585.9L898.5 592.1L898.5 700.0L898.7 553.3L899.0 623.6L899.0 589.1L899.2 700.0L899.3 564.2L899.5 658.3L899.5 630.0L899.5 684.5L899.9 577.9L900.0 583.8L900.0 632.4L900.2 673.5L900.2 567.8L900.5 578.0L900.5 571.4L900.5 568.2L900.7 700.0L901.0 592.5L901.0 601.7L901.3 688.4L901.4 561.9L901.5 569.0L901.5 578.9L901.6 688.0L902.0 572.2L902.0 588.5L902.0 609.8L902.0 700.0L902.2 566.0L902.5 607.3L902.5 650.5L902.6 694.7L902.8 570.4L903.0 598.6L903.0 579.5L903.0 552.7L903.4 670.0L903.5 604.0L903.5 598.7L903.6 555.1L903.6 638.5L904.0 627.5L904.0 613.3L904.2 659.9L904.4 569.4L904.5 627.2L904.5 590.0L904.5 660.4L904.8 566.0L905.0 618.3L905.0 580.0L905.0 699.2L905.3 574.9L905.5 576.9L905.5 603.0L905.6 678.9L905.9 572.5L906.0 634.0L906.0 609.5L906.0 688.0L906.3 560.3L906.5 604.9L906.5 661.7L906.6 565.3L907.0 587.6L907.0 614.4L907.1 566.2L907.1 700.0L907.5 601.2L907.5 581.2L907.7 700.0L907.8 573.9L908.0 640.6L908.0 595.3L908.0 569.2L908.5 700.0L908.5 584.1L908.5 586.5L908.6 682.8L909.0 572.6L909.0 594.0L909.0 607.4L909.3 700.0L909.5 576.9L909.5 621.6L909.5 598.1L909.8 700.0L909.8 569.8L910.0 644.4L910.0 600.2L910.0 562.7L910.1 661.7L910.5 606.4L910.5 612.3L910.6 570.1L910.7 650.2L911.0 596.1L911.0 587.3L911.3 566.2L911.4 676.0L911.5 576.6L911.5 570.4L911.5 557.9L911.7 697.1L912.0 671.2L912.0 622.9L912.1 570.6L912.4 698.4L912.5 607.9L912.5 617.5L912.6 568.8L912.6 675.0L913.0 605.2L913.0 594.8L913.4 700.0L913.5 570.6L913.5 574.7L913.5 596.7L913.5 679.0L913.8 574.1L914.0 603.4L914.0 579.6L914.5 552.4L914.5 700.0L914.5 605.7L914.8 663.6L914.9 571.5L915.0 621.4L915.0 590.9L915.5 561.8L915.5 676.0L915.5 642.9L915.5 608.3L915.6 563.3L915.7 673.0L916.0 609.1L916.0 613.6L916.0 652.3L916.4 557.6L916.5 638.4L916.5 634.9L916.6 570.7L916.6 695.1L917.0 674.5L917.0 605.8L917.3 686.7L917.3 561.6L917.5 585.0L917.5 622.6L917.6 700.0L917.9 556.8L918.0 600.9L918.0 592.4L918.1 700.0L918.3 563.5L918.5 594.2L918.5 652.0L918.8 684.6L918.9 565.4L919.0 602.4L919.0 633.5L919.3 700.0L919.4 559.5L919.5 598.4L919.5 628.6L919.5 562.9L919.7 655.2L920.0 597.8L920.0 603.6L920.1 697.0L920.4 572.2L920.5 612.1L920.5 606.4L920.5 700.0L920.5 569.8L921.0 572.4L921.0 611.5L921.4 554.7L921.5 690.1L921.5 614.3L921.5 622.9L921.6 696.5L922.0 576.3L922.0 639.8L922.0 602.7L922.1 683.3L922.3 560.3L922.5 597.6L922.5 631.8L922.8 681.8L922.9 575.8L923.0 673.7L923.0 604.4L923.0 562.8L923.2 676.6L923.5 580.9L923.5 588.0L923.6 700.0L923.9 569.0L924.0 608.2L924.0 573.1L924.2 554.8L924.4 675.4L924.5 649.1L924.5 659.8L924.6 700.0L924.9 570.0L925.0 606.8L925.0 577.5L925.1 700.0L925.4 564.0L925.5 581.7L925.5 623.5L925.5 700.0L925.6 563.5L926.0 677.2L926.0 646.0L926.2 566.1L926.4 700.0L926.5 618.5L926.5 582.1L926.9 567.9L926.9 661.7L927.0 630.1L927.0 598.1L927.2 680.6L927.2 561.1L927.5 585.9L927.5 587.0L927.6 570.2L927.8 680.1L928.0 577.1L928.0 617.2L928.1 565.1L928.4 675.2L928.5 607.8L928.5 630.3L928.6 563.0L928.8 670.5L929.0 589.6L929.0 589.1L929.4 558.0L929.5 680.6L929.5 631.0L929.7 645.3L929.9 563.5L930.0 594.2L930.0 592.4L930.1 659.8L930.3 565.3L930.5 629.7L930.5 613.7L930.7 565.9L930.9 662.8L931.0 607.9L931.0 588.7L931.2 561.4L931.3 668.3L931.5 570.8L931.5 574.4L931.6 677.2L931.9 567.3L932.0 611.5L932.0 642.8L932.1 664.4L932.4 562.4L932.5 589.4L932.5 585.4L932.7 680.4L932.8 564.1L933.0 599.0L933.0 577.3L933.3 569.6L933.3 683.5L933.5 602.9L933.5 614.6L933.7 691.2L933.8 564.4L934.0 611.0L934.0 608.8L934.1 560.1L934.3 659.5L934.5 609.4L934.5 561.2L934.9 547.5L934.9 673.6L935.0 565.2L935.0 604.0L935.0 660.3L935.4 566.9L935.5 613.2L935.5 667.4L935.9 558.6L936.0 622.0L936.0 606.6L936.2 560.9L936.5 689.5L936.5 601.7L936.5 575.0L936.7 667.7L937.0 565.0L937.0 605.6L937.0 586.6L937.3 559.9L937.3 700.0L937.5 598.8L937.5 573.5L937.7 660.8L937.9 563.0L938.0 629.5L938.0 630.3L938.0 700.0L938.4 548.3L938.5 632.4L938.5 611.2L938.6 566.6L938.8 679.4L939.0 577.4L939.0 599.5L939.1 564.4L939.2 663.1L939.5 580.6L939.5 574.2L939.6 700.0L939.9 560.1L940.0 571.7L940.0 566.8L940.2 660.1L940.5 590.8L940.5 642.9L940.9 681.8L941.0 564.0L941.0 592.7L941.0 604.8L941.2 564.4L941.3 700.0L941.5 578.7L941.5 596.4L941.6 563.5L941.8 680.2L942.0 592.9L942.0 591.9L942.3 681.1L942.4 568.2L942.5 602.8L942.5 587.6L942.6 570.1L942.9 700.0L943.0 584.2L943.0 595.2L943.1 700.0L943.4 561.2L943.5 640.1L943.5 610.5L943.6 700.0L943.8 565.9L944.0 590.5L944.0 654.9L944.2 555.3L944.4 695.4L944.5 592.7L944.5 605.0L944.7 563.2L944.8 700.0L945.0 640.8L945.0 614.6L945.1 700.0L945.2 554.8L945.5 586.7L945.5 574.0L945.6 564.3L945.9 679.0L946.0 598.3L946.0 592.4L946.4 666.0L946.4 560.9L946.5 596.6L946.5 617.0L946.9 669.3L947.0 564.0L947.0 598.8L947.0 646.5L947.1 661.0L947.3 567.1L947.5 618.5L947.5 607.5L947.7 700.0L947.8 556.8L948.0 596.4L948.0 614.3L948.1 700.0L948.5 569.7L948.5 627.0L948.5 594.2L948.8 561.7L948.9 652.5L949.0 572.1L949.0 578.8L949.3 566.8L949.4 700.0L949.5 588.9L949.5 621.5L949.7 669.2L949.8 561.3L950.0 599.0L950.0 589.1L950.3 555.0L950.5 685.1L950.5 613.3L950.5 651.0L950.7 684.4L950.8 561.8L951.0 631.3L951.0 644.2L951.0 563.6L951.5 665.9L951.5 621.7L951.5 596.7L951.6 700.0L951.7 559.9L952.0 645.1L952.0 594.1L952.1 659.8L952.3 571.5L952.5 591.8L952.5 561.2L953.0 661.4L953.0 600.8L953.0 599.0L953.0 556.5L953.3 687.3L953.5 654.1L953.5 651.4L953.7 555.8L953.7 694.6L954.0 585.5L954.0 572.2L954.1 700.0L954.3 551.8L954.5 604.3L954.5 586.6L954.5 700.0L954.6 556.0L955.0 700.0L955.0 577.0L955.1 698.6L955.4 555.6L955.5 632.6L955.5 610.7L955.8 697.4L955.8 566.6L956.0 647.3L956.0 603.7L956.4 664.9L956.4 560.7L956.5 589.2L956.5 578.2L956.7 565.1L956.9 675.2L957.0 647.9L957.0 589.0L957.0 670.1L957.4 566.0L957.5 643.5L957.5 581.2L957.9 686.1L958.0 565.2L958.0 617.6L958.0 595.0L958.3 559.3L958.5 700.0L958.5 596.9L958.5 596.2L958.8 558.7L959.0 700.0L959.0 675.8L959.0 652.9L959.1 568.6L959.4 680.5L959.5 574.8L959.5 614.6L959.5 669.6L959.6 562.8L960.0 567.1L960.0 580.4L960.1 551.5L960.3 678.2L960.5 596.1L960.5 605.3L960.6 700.0L960.9 551.9L961.0 595.0L961.0 670.4L961.1 682.2L961.3 556.6L961.5 601.7L961.5 593.6L961.7 687.9L962.0 559.8L962.0 608.0L962.0 637.5L962.1 560.3L962.1 700.0L962.5 606.7L962.5 589.8L962.6 562.3L962.8 683.5L963.0 586.5L963.0 583.7L963.2 560.6L963.4 670.9L963.5 585.9L963.5 602.7L963.8 558.6L963.9 665.4L964.0 661.3L964.0 622.2L964.1 690.7L964.4 561.6L964.5 575.8L964.5 574.2L964.7 659.4L964.8 564.6L965.0 601.2L965.0 599.8L965.1 700.0L965.5 564.2L965.5 577.8L965.5 596.0L965.8 662.9L966.0 571.0L966.0 620.8L966.0 614.9L966.4 549.0L966.5 685.1L966.5 565.1L966.5 593.0L966.5 690.3L966.9 558.5L967.0 600.1L967.0 595.4L967.3 660.0L967.4 560.6L967.5 593.7L967.5 604.2L967.7 555.1L967.7 657.0L968.0 599.5L968.0 632.4L968.0 700.0L968.0 555.1L968.5 586.8L968.5 595.1L968.6 559.7L968.9 675.1L969.0 576.6L969.0 600.8L969.3 700.0L969.5 556.6L969.5 578.4L969.5 594.4L969.6 688.9L969.7 563.1L970.0 569.0L970.0 569.5L970.1 670.5L970.5 564.7L970.5 580.3L970.5 602.1L970.6 675.9L970.7 558.7L971.0 604.5L971.0 625.5L971.1 691.3L971.3 565.6L971.5 634.4L971.5 601.2L971.6 695.3L971.7 564.3L972.0 629.4L972.0 604.1L972.2 566.5L972.4 673.6L972.5 602.4L972.5 611.5L972.5 673.2L972.8 564.5L973.0 601.4L973.0 654.3L973.0 700.0L973.1 575.6L973.5 640.4L973.5 599.4L973.7 663.5L973.8 567.0L974.0 599.3L974.0 594.8L974.2 700.0L974.3 553.7L974.5 578.4L974.5 591.1L974.6 563.4L974.8 675.7L975.0 592.1L975.0 586.1L975.1 554.0L975.4 695.5L975.5 586.2L975.5 622.2L975.5 687.5L975.8 560.4L976.0 601.4L976.0 610.8L976.0 559.9L976.4 657.6L976.5 629.7L976.5 626.8L976.7 658.1L977.0 557.8L977.0 574.9L977.0 582.3L977.0 563.9L977.4 696.6L977.5 607.6L977.5 620.2L977.5 562.6L977.5 700.0L978.0 644.6L978.0 624.5L978.1 667.9L978.2 567.0L978.5 599.8L978.5 600.9L978.9 660.8L979.0 563.8L979.0 594.1L979.0 568.9L979.0 671.5L979.5 552.4L979.5 571.6L979.5 558.3L980.0 674.5L980.0 642.5L980.0 649.0L980.4 561.0L980.4 670.1L980.5 638.1L980.5 585.5L980.8 672.9L980.9 556.7L981.0 590.8L981.0 597.3L981.2 684.0L981.4 558.4L981.5 577.8L981.5 584.3L981.7 700.0L981.7 547.6L982.0 584.4L982.0 567.1L982.2 559.4L982.3 681.8L982.5 600.8L982.5 613.8L982.9 554.6L983.0 700.0L983.0 573.6L983.0 602.9L983.2 563.5L983.3 673.4L983.5 564.4L983.5 563.8L983.8 553.9L984.0 685.4L984.0 627.5L984.0 588.7L984.3 550.8L984.5 684.0L984.5 575.8L984.5 603.2L984.7 554.2L984.8 698.9L985.0 580.5L985.0 621.6L985.3 561.6L985.4 700.0L985.5 603.5L985.5 610.6L985.5 680.5L986.0 564.9L986.0 571.0L986.0 568.3L986.0 564.1L986.4 700.0L986.5 576.2L986.5 591.0L986.5 669.0L986.8 553.0L987.0 579.8L987.0 582.9L987.3 680.1L987.3 560.6L987.5 603.0L987.5 623.4L987.7 700.0L987.9 561.1L988.0 593.5L988.0 579.2L988.1 550.7L988.5 700.0L988.5 595.7L988.5 590.3L988.6 696.7L988.7 557.9L989.0 578.8L989.0 586.4L989.2 673.2L989.2 559.9L989.5 592.1L989.5 607.1L989.5 700.0L990.0 553.0L990.0 593.4L990.0 593.9L990.4 700.0L990.5 547.0L990.5 646.7L990.5 621.5L990.6 685.2L990.9 562.3L991.0 637.4L991.0 638.2L991.2 669.1L991.3 555.4L991.5 632.1L991.5 612.9L991.6 700.0L991.9 564.8L992.0 609.8L992.0 606.3L992.1 557.2L992.1 693.9L992.5 586.1L992.5 626.0L992.7 553.3L992.8 682.2L993.0 592.4L993.0 636.9L993.1 566.3L993.3 670.5L993.5 609.2L993.5 605.1L993.7 690.4L993.8 558.9L994.0 607.3L994.0 580.3L994.2 553.3L994.5 700.0L994.5 592.7L994.5 604.5L994.7 559.1L994.9 693.0L995.0 602.1L995.0 584.0L995.0 540.6L995.3 665.0L995.5 601.6L995.5 627.4L995.6 561.0L995.7 700.0L996.0 615.8L996.0 621.0L996.1 700.0L996.3 564.1L996.5 614.1L996.5 628.2L996.5 561.6L996.9 700.0L997.0 579.5L997.0 577.7L997.1 558.3L997.4 657.3L997.5 593.2L997.5 605.7L997.6 554.5L997.9 668.7L998.0 589.7L998.0 569.8L998.1 679.3L998.5 553.1L998.5 554.4L998.5 581.7L998.6 699.7L998.9 558.6L999.0 584.2L999.0 567.5L999.0 700.0L999.2 560.4L999.5 608.3L999.5 589.2L999.5 671.8L999.6 558.1L1000.0 590.9L1000.0 587.4L1000.1 692.8L1000.1 565.1L1000.3 608.3M586.2 600V76.3M587.4 600V76.3M600.0 575V528.3M680.5 575V383.1M736.4 575V435.2M776.7 575V434.0M807.2 575V422.0M831.4 575V476.0M852.6 575V488.6M870.9 575V508.0M886.7 575V437.4M901.5 575V529.5M914.6 575V453.7M926.5 575V488.9M937.5 575V449.6M947.7 575V475.0M957.1 575V439.2M966.0 575V527.3M974.3 575V496.7M982.1 575V487.7M989.6 575V442.3M740.8 575V613.7M854.9 575V613.7M850.2 575V527.6" stroke="#ff0000" stroke-opacity="0.78"/>
</g>
<rect x="0.5" y="0.5" width="1023" height="687" fill="none" stroke="#000" stroke-width="1"/>
<text x="45" y="40" font-size="12" text-anchor="end">+<tspan dx="0.8">10</tspan></text>
<text x="45" y="81" font-size="12" text-anchor="end">0</text>
<text x="45" y="122" font-size="12" text-anchor="end">-<tspan dx="1.4">10</tspan></text>
<text x="45" y="163" font-size="12" text-anchor="end">-<tspan dx="1.4">20</tspan></text>
<text x="45" y="205" font-size="12" text-anchor="end">-<tspan dx="1.4">30</tspan></text>
<text x="45" y="246" font-size="12" text-anchor="end">-<tspan dx="1.4">40</tspan></text>
<text x="45" y="287" font-size="12" text-anchor="end">-<tspan dx="1.4">50</tspan></text>
<text x="45" y="328" font-size="12" text-anchor="end">-<tspan dx="1.4">60</tspan></text>
<text x="45" y="370" font-size="12" text-anchor="end">-<tspan dx="1.4">70</tspan></text>
<text x="45" y="411" font-size="12" text-anchor="end">-<tspan dx="1.4">80</tspan></text>
<text x="45" y="452" font-size="12" text-anchor="end">-<tspan dx="1.4">90</tspan></text>
<text x="45" y="493" font-size="12" text-anchor="end">-<tspan dx="1.4">100</tspan></text>
<text x="45" y="535" font-size="12" text-anchor="end">-<tspan dx="1.4">110</tspan></text>
<text x="45" y="576" font-size="12" text-anchor="end">-<tspan dx="1.4">120</tspan></text>
<text x="45" y="617" font-size="12" text-anchor="end">-<tspan dx="1.4">130</tspan></text>
<text x="48.6" y="670" font-size="12" text-anchor="middle">20</text>
<text x="104.2" y="670" font-size="12" text-anchor="middle">30</text>
<text x="174.3" y="670" font-size="12" text-anchor="middle">50</text>
<text x="269.4" y="670" font-size="12" text-anchor="middle">100</text>
<text x="364.5" y="670" font-size="12" text-anchor="middle">200</text>
<text x="420.1" y="670" font-size="12" text-anchor="middle">300</text>
<text x="490.2" y="670" font-size="12" text-anchor="middle">500</text>
<text x="585.3" y="670" font-size="12" text-anchor="middle">1k</text>
<text x="680.4" y="670" font-size="12" text-anchor="middle">2k</text>
<text x="736.0" y="670" font-size="12" text-anchor="middle">3k</text>
<text x="806.1" y="670" font-size="12" text-anchor="middle">5k</text>
<text x="901.2" y="670" font-size="12" text-anchor="middle">10k</text>
<text x="996.3" y="670" font-size="12" text-anchor="middle">20k</text>
<text x="522" y="682" font-size="12" text-anchor="middle">Frequency (Hz)</text>
<text transform="translate(14 344) rotate(-90)" font-size="12" text-anchor="middle">Level -&gt; Normalize (dBrA)</text>
<rect x="452" y="1" width="16" height="15" fill="#324a5f"/>
<path d="M454.6 12.6 Q456.6 13 457.6 10.2 L459.4 5.4 Q460.4 3.2 462.6 3.8 M456.2 6.6 H461" stroke="#fff" stroke-width="1.3" fill="none" stroke-linecap="round"/>
<path d="M460.4 8.2 L465.2 12.6 M465.2 8.2 L460.4 12.6" stroke="#fff" stroke-width="1.2" fill="none" stroke-linecap="round"/>
<text x="471" y="12" font-size="12" textLength="137.5" lengthAdjust="spacingAndGlyphs">FFT Spectrum -&gt; Normalize</text>
<text x="717.2" y="29" font-size="12" textLength="278.2" lengthAdjust="spacingAndGlyphs">10.02.2018 17:50:52.612 - 10.02.2018 17:53:42.876</text>
<g stroke="#1e78be" fill="none"><path d="M963.4 56.2 L970.4 47.9 L973 47.5 L972.2 55.8 M968.4 53.6 L972.4 53.6" stroke-width="2" stroke-linejoin="round"/><path d="M975.5 50.3 L974.2 58" stroke-width="1.9"/><ellipse cx="977.9" cy="52.7" rx="2.0" ry="2.3" stroke-width="1.7"/><path d="M973 45.1 C981 44.2 987.1 48.5 986.6 53 C986.1 57.9 978.5 61.2 970.3 60.9 C977.8 60.1 984.3 56.9 984.8 53 C985.2 49.3 980.2 45.7 973 45.1 Z" fill="#1e78be" stroke-width="0.4"/></g>
</svg></body></html>
